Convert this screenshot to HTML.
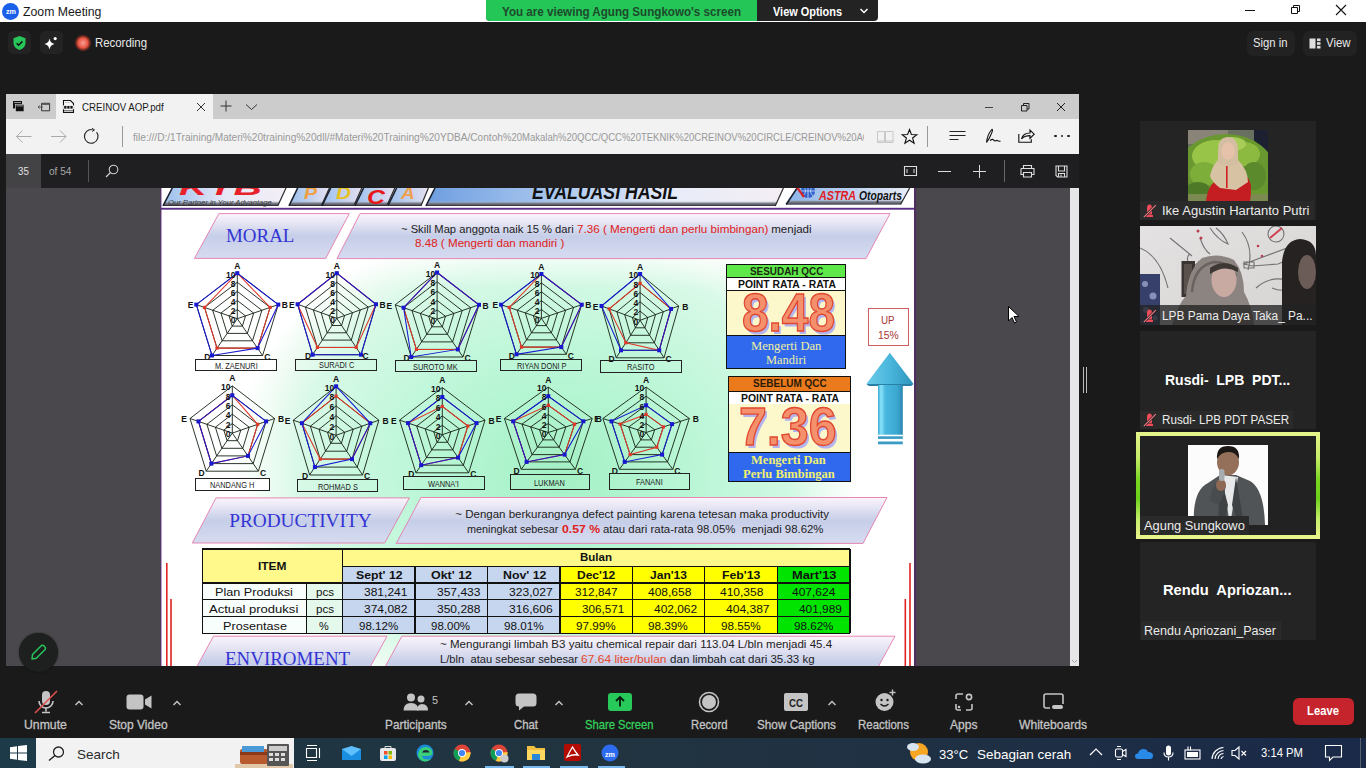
<!DOCTYPE html><html><head><meta charset="utf-8"><style>
*{margin:0;padding:0;box-sizing:border-box}
html,body{width:1366px;height:768px;overflow:hidden;background:#1a1a1a;font-family:"Liberation Sans",sans-serif;position:relative}
.ab{position:absolute}
.t{position:absolute;white-space:pre;line-height:1}
svg.ab{overflow:visible}
</style></head><body>
<div class="ab" style="left:0px;top:0px;width:1366px;height:22px;background:#fff;"></div>
<div class="ab" style="left:2px;top:3px;width:17px;height:17px;background:#1a5fe8;border-radius:50%"></div>
<div class="t" style="left:5.50px;top:8.35px;font-size:7.50px;color:#fff;font-family:'Liberation Sans',sans-serif;font-weight:bold;transform:scaleX(0.9598);transform-origin:0 0;">zm</div>
<div class="t" style="left:22.50px;top:6.37px;font-size:12.20px;color:#1a1a1a;font-family:'Liberation Sans',sans-serif;transform:scaleX(1.0067);transform-origin:0 0;">Zoom Meeting</div>
<div class="ab" style="left:486px;top:0;width:392px;height:21px;border-radius:0 0 4px 4px;background:#232323;overflow:hidden"><div class="ab" style="left:0;top:0;width:271px;height:21px;background:#24c658"></div></div>
<div class="t" style="left:501.50px;top:4.69px;font-size:13.00px;color:#1d4a2b;font-family:'Liberation Sans',sans-serif;font-weight:bold;transform:scaleX(0.8935);transform-origin:0 0;">You are viewing Agung Sungkowo's screen</div>
<div class="t" style="left:772.80px;top:4.69px;font-size:13.00px;color:#fff;font-family:'Liberation Sans',sans-serif;font-weight:bold;transform:scaleX(0.8404);transform-origin:0 0;">View Options</div>
<svg class="ab" style="left:859px;top:7px" width="10" height="8"><path d="M1.5 2L5 5.5L8.5 2" stroke="#fff" stroke-width="1.5" fill="none"/></svg>
<div class="ab" style="left:1245px;top:10px;width:10px;height:1px;background:#111;"></div>
<svg class="ab" style="left:1289px;top:4px" width="12" height="12"><path d="M2.5 3.5h6v6h-6z M4.5 3.5v-2h6v6h-2" stroke="#111" stroke-width="1" fill="none"/></svg>
<svg class="ab" style="left:1335px;top:4px" width="12" height="12"><path d="M1 1L11 11M11 1L1 11" stroke="#111" stroke-width="1.1"/></svg>
<div class="ab" style="left:8px;top:31px;width:23px;height:23px;background:#232323;border-radius:5px"></div>
<svg class="ab" style="left:12px;top:35px" width="15" height="16"><path d="M7.5 1L13.5 3.2V8c0 3.6-2.8 6-6 7C4.3 14 1.5 11.6 1.5 8V3.2z" fill="#27c55a"/><path d="M4.6 8.2l2 2 3.8-3.8" stroke="#111" stroke-width="1.5" fill="none"/></svg>
<div class="ab" style="left:40px;top:31px;width:23px;height:23px;background:#232323;border-radius:5px"></div>
<svg class="ab" style="left:43px;top:35px" width="16" height="16"><path d="M6.5 3.5Q7.3 8.2 11.5 9Q7.3 9.8 6.5 14.5Q5.7 9.8 1.5 9Q5.7 8.2 6.5 3.5z" fill="#fff"/><circle cx="12.2" cy="3.6" r="1.6" fill="#fff"/></svg>
<div class="ab" style="left:75px;top:35px;width:16px;height:16px;border-radius:50%;background:radial-gradient(circle,#f8a090 0%,#e8503f 45%,rgba(200,60,40,0.5) 60%,rgba(40,20,20,0) 100%)"></div>
<div class="t" style="left:95.00px;top:37.33px;font-size:12.60px;color:#e8e8e8;font-family:'Liberation Sans',sans-serif;transform:scaleX(0.9054);transform-origin:0 0;">Recording</div>
<div class="ab" style="left:1247px;top:31px;width:48px;height:25px;background:#222;border-radius:6px"></div>
<div class="t" style="left:1252.50px;top:37.33px;font-size:12.60px;color:#e8e8e8;font-family:'Liberation Sans',sans-serif;transform:scaleX(0.8955);transform-origin:0 0;">Sign in</div>
<div class="ab" style="left:1303px;top:31px;width:54px;height:25px;background:#222;border-radius:6px"></div>
<svg class="ab" style="left:1309px;top:38px" width="12" height="11"><rect x="0.5" y="0.5" width="6" height="10" fill="#ddd"/><rect x="8" y="0.5" width="3.5" height="2.6" fill="#ddd"/><rect x="8" y="4.2" width="3.5" height="2.6" fill="#ddd"/><rect x="8" y="7.9" width="3.5" height="2.6" fill="#ddd"/></svg>
<div class="t" style="left:1326.00px;top:37.33px;font-size:12.60px;color:#e8e8e8;font-family:'Liberation Sans',sans-serif;transform:scaleX(0.9046);transform-origin:0 0;">View</div>
<div class="ab" style="left:6px;top:94px;width:1073px;height:25px;background:#cccccc;"></div>
<div class="ab" style="left:56px;top:94px;width:157px;height:25px;background:#f2f2f2;"></div>
<div class="ab" style="left:6px;top:119px;width:1073px;height:35px;background:#f2f2f2;"></div>
<div class="ab" style="left:6px;top:154px;width:1073px;height:34px;background:#1f1f21;"></div>
<div class="ab" style="left:6px;top:154px;width:35px;height:34px;background:#434346;"></div>
<div class="ab" style="left:6px;top:188px;width:1064px;height:478px;background:#4a484c;"></div>
<div class="ab" style="left:1070px;top:188px;width:9px;height:478px;background:#e6e6e8;"></div>
<svg class="ab" style="left:1071px;top:659px" width="7" height="5" viewBox="0 0 7 5"><path d="M1 1L3.5 3.5L6 1" stroke="#999" stroke-width="0.9" fill="none"/></svg>
<svg class="ab" style="left:12px;top:99px" width="14" height="14" viewBox="0 0 14 14"><rect x="1" y="2" width="9" height="7.4" fill="#111"/><rect x="2" y="3.2" width="7" height="0.8" fill="#bbb"/><rect x="3.4" y="5.3" width="8.6" height="7.4" fill="#111" stroke="#ccc" stroke-width="0.7"/><rect x="4.4" y="6.5" width="6.6" height="0.8" fill="#bbb"/></svg>
<svg class="ab" style="left:37px;top:101px" width="14" height="12" viewBox="0 0 14 12"><path d="M4.6 2.3h8v7.5h-8z" stroke="#333" stroke-width="1" fill="none"/><rect x="4.6" y="2.3" width="8" height="1.6" fill="#555"/><path d="M1 6h5 M2.8 4.5L1 6L2.8 7.5" stroke="#555" stroke-width="0.9" fill="none"/></svg>
<svg class="ab" style="left:62px;top:99px" width="13" height="15" viewBox="0 0 13 15"><path d="M1.5 1.5h7l3 3v9h-10z" stroke="#111" stroke-width="1.1" fill="#fafafa"/><path d="M3 3.5h5" stroke="#999" stroke-width="0.6"/><rect x="1" y="6.3" width="11" height="4" fill="#ddd"/><g fill="#111"><rect x="2.2" y="7" width="2.2" height="2.6"/><rect x="5.3" y="7" width="2.2" height="2.6"/><rect x="8.4" y="7" width="2.2" height="2.6"/></g><path d="M2 11.8h9" stroke="#222" stroke-width="0.8"/></svg>
<div class="t" style="left:82.20px;top:101.72px;font-size:11.20px;color:#1a1a1a;font-family:'Liberation Sans',sans-serif;transform:scaleX(0.8664);transform-origin:0 0;">CREINOV AOP.pdf</div>
<svg class="ab" style="left:196px;top:102px" width="10" height="10"><path d="M1 1L9 9M9 1L1 9" stroke="#333" stroke-width="1"/></svg>
<svg class="ab" style="left:220px;top:100px" width="12" height="12"><path d="M6 0.5v11M0.5 6h11" stroke="#333" stroke-width="1"/></svg>
<svg class="ab" style="left:245px;top:103px" width="13" height="8"><path d="M1 1.5L6.5 6.5L12 1.5" stroke="#333" stroke-width="1" fill="none"/></svg>
<div class="ab" style="left:985px;top:107px;width:8px;height:1px;background:#444;"></div>
<svg class="ab" style="left:1020px;top:102px" width="11" height="10"><path d="M1.5 3.5h5.5v5.5h-5.5z M3.5 3.5v-2h5.5v5.5h-2" stroke="#222" stroke-width="1" fill="none"/></svg>
<svg class="ab" style="left:1056px;top:102px" width="10" height="10"><path d="M1 1L9 9M9 1L1 9" stroke="#222" stroke-width="1"/></svg>
<svg class="ab" style="left:15px;top:129px" width="18" height="15"><path d="M1.5 7.5h15 M7.5 1.5l-6 6l6 6" stroke="#aaa" stroke-width="1" fill="none"/></svg>
<svg class="ab" style="left:50px;top:129px" width="18" height="15"><path d="M1 7.5h15 M10 1.5l6 6l-6 6" stroke="#aaa" stroke-width="1" fill="none"/></svg>
<svg class="ab" style="left:84px;top:128px" width="17" height="17"><path d="M12.6 4.2A6.8 6.8 0 1 1 8.5 1.7" stroke="#222" stroke-width="1.1" fill="none"/><path d="M8 0.3L10.5 1.9L8 3.5" stroke="#222" stroke-width="1" fill="none"/></svg>
<div class="ab" style="left:122px;top:126px;width:1px;height:21px;background:#999;"></div>
<div class="ab" style="left:133px;top:119px;width:731px;height:35px;overflow:hidden"><div class="t" style="left:0.00px;top:12.63px;font-size:11.30px;color:#999;font-family:'Liberation Sans',sans-serif;transform:scaleX(0.8957);transform-origin:0 0;">file:///D:/1Training/Materi%20training%20dll/#Materi%20Training%20YDBA/Contoh</div><div class="t" style="left:370.00px;top:12.63px;font-size:11.30px;color:#999;font-family:'Liberation Sans',sans-serif;transform:scaleX(0.8417);transform-origin:0 0;">%20Makalah%20QCC/QCC%20TEKNIK%20CREINOV%20CIRCLE/CREINOV%20AOP.pdf</div></div>
<svg class="ab" style="left:877px;top:130px" width="17" height="14"><path d="M0.5 1.5h7v11h-7z M8.5 1.5h7.5v11h-7.5z M0.5 11h16" stroke="#c8c8c8" stroke-width="1" fill="none"/></svg>
<svg class="ab" style="left:901px;top:128px" width="17" height="17"><path d="M8.5 1.5L10.4 6.5L15.8 6.7L11.6 10L13.1 15.3L8.5 12.2L3.9 15.3L5.4 10L1.2 6.7L6.6 6.5z" stroke="#111" stroke-width="1.1" fill="none"/></svg>
<div class="ab" style="left:927px;top:126px;width:1px;height:21px;background:#999;"></div>
<svg class="ab" style="left:949px;top:130px" width="18" height="12"><path d="M0.5 1.5h16 M0.5 5.5h16 M0.5 9.5h9" stroke="#222" stroke-width="1.1"/></svg>
<svg class="ab" style="left:985px;top:128px" width="16" height="16"><path d="M1.5 14.5C2 10 4.5 4 6.8 1.5C8 1 7.5 3.5 6 6.5C4.8 9.5 3 12.5 1.5 14.5 M5 12.5C7 11 8.5 11 9 12.5C10 13.6 11 12 12 12.5C13 13 14 13.6 15.5 13" stroke="#111" stroke-width="1.1" fill="none"/></svg>
<svg class="ab" style="left:1018px;top:128px" width="17" height="15"><path d="M0.8 6v8.2h12.5v-3 M3.5 11C4.5 7 7.5 5 12 5V2l4.2 4.2L12 10.4V7.6C8.5 7.6 5.5 8.5 3.5 11z" stroke="#111" stroke-width="1.1" fill="none"/></svg>
<div class="ab" style="left:1054.4px;top:135.3px;width:2.2px;height:2.2px;background:#222;border-radius:50%"></div>
<div class="ab" style="left:1060.9px;top:135.3px;width:2.2px;height:2.2px;background:#222;border-radius:50%"></div>
<div class="ab" style="left:1067.4px;top:135.3px;width:2.2px;height:2.2px;background:#222;border-radius:50%"></div>
<div class="t" style="left:17.70px;top:166.41px;font-size:10.50px;color:#e0e0e0;font-family:'Liberation Sans',sans-serif;transform:scaleX(0.9247);transform-origin:0 0;">35</div>
<div class="t" style="left:48.50px;top:166.41px;font-size:10.50px;color:#a8a8a8;font-family:'Liberation Sans',sans-serif;transform:scaleX(0.9549);transform-origin:0 0;">of 54</div>
<div class="ab" style="left:88px;top:160px;width:1px;height:22px;background:#555;"></div>
<svg class="ab" style="left:105px;top:164px" width="14" height="14"><circle cx="8.5" cy="5.5" r="4.3" stroke="#ccc" stroke-width="1.1" fill="none"/><path d="M5.5 8.5L1 13" stroke="#ccc" stroke-width="1.3"/></svg>
<svg class="ab" style="left:903px;top:165px" width="15" height="12"><path d="M1.5 1.5h12v9h-12z" stroke="#ddd" stroke-width="1.1" fill="none"/><path d="M4 4v4 M11 4v4" stroke="#ddd" stroke-width="1"/></svg>
<div class="ab" style="left:938px;top:170.5px;width:13px;height:1.3px;background:#ddd;"></div>
<div class="ab" style="left:972.5px;top:170.5px;width:13.5px;height:1.3px;background:#ddd;"></div>
<div class="ab" style="left:978.6px;top:164.5px;width:1.3px;height:13px;background:#ddd;"></div>
<div class="ab" style="left:1003.5px;top:160px;width:1px;height:22px;background:#666;"></div>
<svg class="ab" style="left:1020px;top:164px" width="15" height="14"><path d="M3.5 4.5V1.5h8v3 M1 4.5h13v6h-2.5 M3.5 10.5H1v-6 M3.5 8.5h8v4.5h-8z" stroke="#ddd" stroke-width="1.1" fill="none"/></svg>
<svg class="ab" style="left:1055px;top:165px" width="13" height="13"><path d="M1 1h11v11H2.5L1 10.5z M3.5 1v5h6V1 M3.5 12V8.5h6V12 M6 9.5v2" stroke="#ddd" stroke-width="1.1" fill="none"/></svg>
<div class="ab" style="left:160px;top:188px;width:753.8px;height:478px;background:#fff;"></div>
<div class="ab" style="left:163px;top:258px;width:748px;height:408px;background:radial-gradient(ellipse 330px 260px at 397px 212px,#a4f0c4 0%,#b4f5d2 30%,#c0f7da 50%,#d8f9e7 80%,#eafbf0 90%,#ffffff 100%)"></div>
<div class="ab" style="left:163px;top:258px;width:140px;height:408px;background:linear-gradient(90deg,#fff 0%,rgba(255,255,255,0) 100%)"></div>
<div class="ab" style="left:790px;top:258px;width:121px;height:408px;background:linear-gradient(90deg,rgba(255,255,255,0) 0%,#fff 60%)"></div>
<div class="ab" style="left:163px;top:258px;width:748px;height:30px;background:linear-gradient(180deg,rgba(255,255,255,0.6) 0%,rgba(255,255,255,0) 100%)"></div>
<div class="ab" style="left:159.7px;top:188px;width:1.6px;height:478px;background:#4e3a5c;"></div>
<div class="ab" style="left:161.3px;top:188px;width:1px;height:478px;background:#b8a0c8;"></div>
<div class="ab" style="left:913.8px;top:188px;width:1.8px;height:478px;background:#4e2e5e;"></div>
<div class="ab" style="left:915.6px;top:188px;width:1.4px;height:478px;background:#4c4250;"></div>
<div class="ab" style="left:161px;top:188px;width:753px;height:478px;overflow:hidden"><svg class="ab" style="left:-161px;top:-188px" width="1366" height="768" viewBox="0 0 1366 768">
<defs>
<linearGradient id="pg" x1="0" y1="0" x2="0" y2="1"><stop offset="0" stop-color="#faf4fc"/><stop offset="0.15" stop-color="#eceaf6"/><stop offset="0.5" stop-color="#c6cee8"/><stop offset="1" stop-color="#d6dbf0"/></linearGradient>
<linearGradient id="kyb" x1="0" y1="0" x2="1" y2="0"><stop offset="0" stop-color="#9cc0ee"/><stop offset="0.5" stop-color="#e4e8f6"/><stop offset="1" stop-color="#f4eef6"/></linearGradient>
<linearGradient id="ev" x1="0" y1="0" x2="1" y2="0"><stop offset="0" stop-color="#6e9ee0"/><stop offset="0.35" stop-color="#a8c6ee"/><stop offset="0.7" stop-color="#e8ecf8"/><stop offset="1" stop-color="#f4eef4"/></linearGradient>
<linearGradient id="box" x1="0" y1="0" x2="1" y2="0"><stop offset="0" stop-color="#8ab4e8"/><stop offset="1" stop-color="#e8ecf6"/></linearGradient>
<linearGradient id="arr" x1="0" y1="0" x2="1" y2="0"><stop offset="0" stop-color="#80d4f0"/><stop offset="0.45" stop-color="#48b8e0"/><stop offset="1" stop-color="#2a8cb8"/></linearGradient>
</defs>
<defs><linearGradient id="bev" x1="0" y1="0" x2="0" y2="1"><stop offset="0" stop-color="#b8c0d0" stop-opacity="0"/><stop offset="0.45" stop-color="#7a7e8a"/><stop offset="0.8" stop-color="#5a5a64"/><stop offset="1" stop-color="#201420"/></linearGradient><linearGradient id="pdca" x1="0" y1="0" x2="1" y2="0"><stop offset="0" stop-color="#9cc0ee"/><stop offset="1" stop-color="#e4e0f0"/></linearGradient></defs>
<polygon points="172.3,188 286,188 277.7,205.9 163,205.9" fill="url(#kyb)"/>
<polygon points="165.598,200.9 280.298,200.9 277.7,205.9 163,205.9" fill="url(#bev)"/>
<line x1="172.3" y1="188" x2="163" y2="205.9" stroke="#1a2030" stroke-width="1.6"/>
<line x1="286" y1="188" x2="277.7" y2="205.9" stroke="#2a2a2a" stroke-width="1.2"/>
<polygon points="297.7,188 329.4,188 321.3,205.9 289,205.9" fill="url(#pdca)"/>
<polygon points="291.43,200.9 323.73,200.9 321.3,205.9 289,205.9" fill="url(#bev)"/>
<line x1="297.7" y1="188" x2="289" y2="205.9" stroke="#1a2030" stroke-width="1.6"/>
<line x1="329.4" y1="188" x2="321.3" y2="205.9" stroke="#2a2a2a" stroke-width="1.2"/>
<polygon points="330.7,188 361.8,188 353.7,205.9 322,205.9" fill="url(#pdca)"/>
<polygon points="324.43,200.9 356.13,200.9 353.7,205.9 322,205.9" fill="url(#bev)"/>
<line x1="330.7" y1="188" x2="322" y2="205.9" stroke="#1a2030" stroke-width="1.6"/>
<line x1="361.8" y1="188" x2="353.7" y2="205.9" stroke="#2a2a2a" stroke-width="1.2"/>
<polygon points="363.6,188 394.8,188 386.7,205.9 354.9,205.9" fill="url(#pdca)"/>
<polygon points="357.33,200.9 389.13,200.9 386.7,205.9 354.9,205.9" fill="url(#bev)"/>
<line x1="363.6" y1="188" x2="354.9" y2="205.9" stroke="#1a2030" stroke-width="1.6"/>
<line x1="394.8" y1="188" x2="386.7" y2="205.9" stroke="#2a2a2a" stroke-width="1.2"/>
<polygon points="396.6,188 428.4,188 420.9,205.9 387.9,205.9" fill="url(#pdca)"/>
<polygon points="390.33,200.9 423.33,200.9 420.9,205.9 387.9,205.9" fill="url(#bev)"/>
<line x1="396.6" y1="188" x2="387.9" y2="205.9" stroke="#1a2030" stroke-width="1.6"/>
<line x1="428.4" y1="188" x2="420.9" y2="205.9" stroke="#2a2a2a" stroke-width="1.2"/>
<polygon points="435,188 783.4,188 775.2,206 425.9,206" fill="url(#ev)"/>
<polygon points="428.428,201 777.728,201 775.2,206 425.9,206" fill="url(#bev)"/>
<line x1="435" y1="188" x2="425.9" y2="206" stroke="#1a2030" stroke-width="1.6"/>
<line x1="783.4" y1="188" x2="775.2" y2="206" stroke="#2a2a2a" stroke-width="1.2"/>
<polygon points="797.1,188 909.7,188 900.5,204.5 786.1,204.5" fill="url(#box)"/>
<polygon points="789.433,199.5 903.833,199.5 900.5,204.5 786.1,204.5" fill="url(#bev)"/>
<line x1="797.1" y1="188" x2="786.1" y2="204.5" stroke="#1a2030" stroke-width="1.6"/>
<line x1="909.7" y1="188" x2="900.5" y2="204.5" stroke="#2a2a2a" stroke-width="1.2"/>
<rect x="161" y="207.8" width="753" height="1.9" fill="#5a2e88"/>
<polygon points="218.9,213.6 349.3,213.6 325.7,258.4 194.4,258.4" fill="url(#pg)" stroke="#e47aac" stroke-width="0.9"/>
<polygon points="360,213.6 890,213.6 866,258.6 337,258.6" fill="url(#pg)" stroke="#e47aac" stroke-width="0.9"/>
<polygon points="216,497.9 409.3,497.9 384.7,543 192.3,543" fill="url(#pg)" stroke="#e47aac" stroke-width="0.9"/>
<polygon points="421,497.5 887,497.5 863,543.4 396.2,543.4" fill="url(#pg)" stroke="#e47aac" stroke-width="0.9"/>
<polygon points="213.5,636.2 387,636.2 357.5,690 184,690" fill="url(#pg)" stroke="#e47aac" stroke-width="0.9"/>
<polygon points="401.9,636.2 895,636.2 865.5,690 372.4,690" fill="url(#pg)" stroke="#e47aac" stroke-width="0.9"/>
<polygon points="237.3,309.6 245.5,315.9 242.4,326.1 232.2,326.1 229.1,315.9" fill="none" stroke="#142014" stroke-width="0.9"/>
<polygon points="237.3,300.5 253.7,313.1 247.4,333.4 227.2,333.4 220.9,313.1" fill="none" stroke="#142014" stroke-width="0.9"/>
<polygon points="237.3,291.4 261.9,310.3 252.5,340.8 222.1,340.8 212.7,310.3" fill="none" stroke="#142014" stroke-width="0.9"/>
<polygon points="237.3,282.3 270.1,307.4 257.6,348.1 217.0,348.1 204.5,307.4" fill="none" stroke="#142014" stroke-width="0.9"/>
<polygon points="237.3,273.2 278.3,304.6 262.6,355.5 212.0,355.5 196.3,304.6" fill="none" stroke="#142014" stroke-width="0.9"/>
<line x1="237.3" y1="318.7" x2="237.3" y2="273.2" stroke="#142014" stroke-width="0.9"/>
<line x1="237.3" y1="318.7" x2="278.3" y2="304.6" stroke="#142014" stroke-width="0.9"/>
<line x1="237.3" y1="318.7" x2="262.6" y2="355.5" stroke="#142014" stroke-width="0.9"/>
<line x1="237.3" y1="318.7" x2="212.0" y2="355.5" stroke="#142014" stroke-width="0.9"/>
<line x1="237.3" y1="318.7" x2="196.3" y2="304.6" stroke="#142014" stroke-width="0.9"/>
<polygon points="237.3,273.2 270.1,307.4 257.6,348.1 217.0,348.1 204.5,307.4" fill="none" stroke="#e03828" stroke-width="1.05"/>
<rect x="235.7" y="271.6" width="3.2" height="3.2" fill="#e03828"/>
<rect x="268.5" y="305.8" width="3.2" height="3.2" fill="#e03828"/>
<rect x="256.0" y="346.5" width="3.2" height="3.2" fill="#e03828"/>
<rect x="215.4" y="346.5" width="3.2" height="3.2" fill="#e03828"/>
<rect x="202.9" y="305.8" width="3.2" height="3.2" fill="#e03828"/>
<polygon points="237.3,273.2 278.3,304.6 257.6,348.1 212.0,355.5 196.3,304.6" fill="none" stroke="#1818d0" stroke-width="1.05"/>
<rect x="235.3" y="271.2" width="4.0" height="4.0" fill="#1818d0"/>
<rect x="276.3" y="302.6" width="4.0" height="4.0" fill="#1818d0"/>
<rect x="255.6" y="346.1" width="4.0" height="4.0" fill="#1818d0"/>
<rect x="210.0" y="353.5" width="4.0" height="4.0" fill="#1818d0"/>
<rect x="194.3" y="302.6" width="4.0" height="4.0" fill="#1818d0"/>
<polygon points="336.8,309.2 344.6,315.5 341.6,325.5 332.0,325.5 329.0,315.5" fill="none" stroke="#142014" stroke-width="0.9"/>
<polygon points="336.8,300.2 352.5,312.7 346.5,332.8 327.1,332.8 321.1,312.7" fill="none" stroke="#142014" stroke-width="0.9"/>
<polygon points="336.8,291.2 360.3,309.9 351.3,340.1 322.3,340.1 313.3,309.9" fill="none" stroke="#142014" stroke-width="0.9"/>
<polygon points="336.8,282.2 368.2,307.1 356.2,347.4 317.4,347.4 305.4,307.1" fill="none" stroke="#142014" stroke-width="0.9"/>
<polygon points="336.8,273.2 376.0,304.3 361.0,354.7 312.6,354.7 297.6,304.3" fill="none" stroke="#142014" stroke-width="0.9"/>
<line x1="336.8" y1="318.3" x2="336.8" y2="273.2" stroke="#142014" stroke-width="0.9"/>
<line x1="336.8" y1="318.3" x2="376.0" y2="304.3" stroke="#142014" stroke-width="0.9"/>
<line x1="336.8" y1="318.3" x2="361.0" y2="354.7" stroke="#142014" stroke-width="0.9"/>
<line x1="336.8" y1="318.3" x2="312.6" y2="354.7" stroke="#142014" stroke-width="0.9"/>
<line x1="336.8" y1="318.3" x2="297.6" y2="304.3" stroke="#142014" stroke-width="0.9"/>
<polygon points="336.8,273.2 376.0,304.3 356.2,347.4 317.4,347.4 297.6,304.3" fill="none" stroke="#e03828" stroke-width="1.05"/>
<rect x="335.2" y="271.6" width="3.2" height="3.2" fill="#e03828"/>
<rect x="374.4" y="302.7" width="3.2" height="3.2" fill="#e03828"/>
<rect x="354.6" y="345.8" width="3.2" height="3.2" fill="#e03828"/>
<rect x="315.8" y="345.8" width="3.2" height="3.2" fill="#e03828"/>
<rect x="296.0" y="302.7" width="3.2" height="3.2" fill="#e03828"/>
<polygon points="336.8,273.2 376.0,304.3 361.0,354.7 312.6,354.7 297.6,304.3" fill="none" stroke="#1818d0" stroke-width="1.05"/>
<rect x="334.8" y="271.2" width="4.0" height="4.0" fill="#1818d0"/>
<rect x="374.0" y="302.3" width="4.0" height="4.0" fill="#1818d0"/>
<rect x="359.0" y="352.7" width="4.0" height="4.0" fill="#1818d0"/>
<rect x="310.6" y="352.7" width="4.0" height="4.0" fill="#1818d0"/>
<rect x="295.6" y="302.3" width="4.0" height="4.0" fill="#1818d0"/>
<polygon points="437.1,309.9 445.5,316.3 442.3,326.8 431.9,326.8 428.7,316.3" fill="none" stroke="#142014" stroke-width="0.9"/>
<polygon points="437.1,300.5 453.9,313.4 447.5,334.3 426.7,334.3 420.3,313.4" fill="none" stroke="#142014" stroke-width="0.9"/>
<polygon points="437.1,291.2 462.2,310.6 452.6,341.9 421.6,341.9 412.0,310.6" fill="none" stroke="#142014" stroke-width="0.9"/>
<polygon points="437.1,281.8 470.6,307.7 457.8,349.4 416.4,349.4 403.6,307.7" fill="none" stroke="#142014" stroke-width="0.9"/>
<polygon points="437.1,272.5 479.0,304.8 463.0,357.0 411.2,357.0 395.2,304.8" fill="none" stroke="#142014" stroke-width="0.9"/>
<line x1="437.1" y1="319.2" x2="437.1" y2="272.5" stroke="#142014" stroke-width="0.9"/>
<line x1="437.1" y1="319.2" x2="479.0" y2="304.8" stroke="#142014" stroke-width="0.9"/>
<line x1="437.1" y1="319.2" x2="463.0" y2="357.0" stroke="#142014" stroke-width="0.9"/>
<line x1="437.1" y1="319.2" x2="411.2" y2="357.0" stroke="#142014" stroke-width="0.9"/>
<line x1="437.1" y1="319.2" x2="395.2" y2="304.8" stroke="#142014" stroke-width="0.9"/>
<polygon points="437.1,272.5 479.0,304.8 457.8,349.4 416.4,349.4 403.6,307.7" fill="none" stroke="#e03828" stroke-width="1.05"/>
<rect x="435.5" y="270.9" width="3.2" height="3.2" fill="#e03828"/>
<rect x="477.4" y="303.2" width="3.2" height="3.2" fill="#e03828"/>
<rect x="456.2" y="347.8" width="3.2" height="3.2" fill="#e03828"/>
<rect x="414.8" y="347.8" width="3.2" height="3.2" fill="#e03828"/>
<rect x="402.0" y="306.1" width="3.2" height="3.2" fill="#e03828"/>
<polygon points="437.1,272.5 479.0,304.8 457.8,349.4 411.2,357.0 403.6,307.7" fill="none" stroke="#1818d0" stroke-width="1.05"/>
<rect x="435.1" y="270.5" width="4.0" height="4.0" fill="#1818d0"/>
<rect x="477.0" y="302.8" width="4.0" height="4.0" fill="#1818d0"/>
<rect x="455.8" y="347.4" width="4.0" height="4.0" fill="#1818d0"/>
<rect x="409.2" y="355.0" width="4.0" height="4.0" fill="#1818d0"/>
<rect x="401.6" y="305.7" width="4.0" height="4.0" fill="#1818d0"/>
<polygon points="541.4,309.5 549.5,315.6 546.4,325.6 536.4,325.6 533.3,315.6" fill="none" stroke="#142014" stroke-width="0.9"/>
<polygon points="541.4,300.6 557.5,312.9 551.4,332.8 531.4,332.8 525.3,312.9" fill="none" stroke="#142014" stroke-width="0.9"/>
<polygon points="541.4,291.8 565.6,310.2 556.3,339.9 526.5,339.9 517.2,310.2" fill="none" stroke="#142014" stroke-width="0.9"/>
<polygon points="541.4,282.9 573.6,307.4 561.3,347.1 521.5,347.1 509.2,307.4" fill="none" stroke="#142014" stroke-width="0.9"/>
<polygon points="541.4,274.0 581.7,304.7 566.3,354.3 516.5,354.3 501.1,304.7" fill="none" stroke="#142014" stroke-width="0.9"/>
<line x1="541.4" y1="318.4" x2="541.4" y2="274.0" stroke="#142014" stroke-width="0.9"/>
<line x1="541.4" y1="318.4" x2="581.7" y2="304.7" stroke="#142014" stroke-width="0.9"/>
<line x1="541.4" y1="318.4" x2="566.3" y2="354.3" stroke="#142014" stroke-width="0.9"/>
<line x1="541.4" y1="318.4" x2="516.5" y2="354.3" stroke="#142014" stroke-width="0.9"/>
<line x1="541.4" y1="318.4" x2="501.1" y2="304.7" stroke="#142014" stroke-width="0.9"/>
<polygon points="541.4,274.0 581.7,304.7 561.3,347.1 521.5,347.1 509.2,307.4" fill="none" stroke="#e03828" stroke-width="1.05"/>
<rect x="539.8" y="272.4" width="3.2" height="3.2" fill="#e03828"/>
<rect x="580.1" y="303.1" width="3.2" height="3.2" fill="#e03828"/>
<rect x="559.7" y="345.5" width="3.2" height="3.2" fill="#e03828"/>
<rect x="519.9" y="345.5" width="3.2" height="3.2" fill="#e03828"/>
<rect x="507.6" y="305.8" width="3.2" height="3.2" fill="#e03828"/>
<polygon points="541.4,274.0 581.7,304.7 561.3,347.1 516.5,354.3 501.1,304.7" fill="none" stroke="#1818d0" stroke-width="1.05"/>
<rect x="539.4" y="272.0" width="4.0" height="4.0" fill="#1818d0"/>
<rect x="579.7" y="302.7" width="4.0" height="4.0" fill="#1818d0"/>
<rect x="559.3" y="345.1" width="4.0" height="4.0" fill="#1818d0"/>
<rect x="514.5" y="352.3" width="4.0" height="4.0" fill="#1818d0"/>
<rect x="499.1" y="302.7" width="4.0" height="4.0" fill="#1818d0"/>
<polygon points="640.1,311.1 647.8,317.5 644.9,327.8 635.3,327.8 632.4,317.5" fill="none" stroke="#142014" stroke-width="0.9"/>
<polygon points="640.1,301.8 655.5,314.6 649.6,335.3 630.6,335.3 624.7,314.6" fill="none" stroke="#142014" stroke-width="0.9"/>
<polygon points="640.1,292.5 663.3,311.7 654.4,342.8 625.8,342.8 616.9,311.7" fill="none" stroke="#142014" stroke-width="0.9"/>
<polygon points="640.1,283.3 671.0,308.9 659.2,350.3 621.0,350.3 609.2,308.9" fill="none" stroke="#142014" stroke-width="0.9"/>
<polygon points="640.1,274.0 678.7,306.0 664.0,357.8 616.2,357.8 601.5,306.0" fill="none" stroke="#142014" stroke-width="0.9"/>
<line x1="640.1" y1="320.3" x2="640.1" y2="274.0" stroke="#142014" stroke-width="0.9"/>
<line x1="640.1" y1="320.3" x2="678.7" y2="306.0" stroke="#142014" stroke-width="0.9"/>
<line x1="640.1" y1="320.3" x2="664.0" y2="357.8" stroke="#142014" stroke-width="0.9"/>
<line x1="640.1" y1="320.3" x2="616.2" y2="357.8" stroke="#142014" stroke-width="0.9"/>
<line x1="640.1" y1="320.3" x2="601.5" y2="306.0" stroke="#142014" stroke-width="0.9"/>
<polygon points="640.1,283.3 671.0,308.9 659.2,350.3 625.8,342.8 609.2,308.9" fill="none" stroke="#e03828" stroke-width="1.05"/>
<rect x="638.5" y="281.7" width="3.2" height="3.2" fill="#e03828"/>
<rect x="669.4" y="307.3" width="3.2" height="3.2" fill="#e03828"/>
<rect x="657.6" y="348.7" width="3.2" height="3.2" fill="#e03828"/>
<rect x="624.2" y="341.2" width="3.2" height="3.2" fill="#e03828"/>
<rect x="607.6" y="307.3" width="3.2" height="3.2" fill="#e03828"/>
<polygon points="640.1,274.0 671.0,308.9 659.2,350.3 621.0,350.3 601.5,306.0" fill="none" stroke="#1818d0" stroke-width="1.05"/>
<rect x="638.1" y="272.0" width="4.0" height="4.0" fill="#1818d0"/>
<rect x="669.0" y="306.9" width="4.0" height="4.0" fill="#1818d0"/>
<rect x="657.2" y="348.3" width="4.0" height="4.0" fill="#1818d0"/>
<rect x="619.0" y="348.3" width="4.0" height="4.0" fill="#1818d0"/>
<rect x="599.5" y="304.0" width="4.0" height="4.0" fill="#1818d0"/>
<polygon points="232.3,423.6 240.8,430.1 237.5,440.7 227.1,440.7 223.8,430.1" fill="none" stroke="#142014" stroke-width="0.9"/>
<polygon points="232.3,414.2 249.2,427.2 242.8,448.3 221.8,448.3 215.4,427.2" fill="none" stroke="#142014" stroke-width="0.9"/>
<polygon points="232.3,404.8 257.7,424.3 248.0,455.9 216.6,455.9 206.9,424.3" fill="none" stroke="#142014" stroke-width="0.9"/>
<polygon points="232.3,395.3 266.1,421.4 253.2,463.6 211.4,463.6 198.5,421.4" fill="none" stroke="#142014" stroke-width="0.9"/>
<polygon points="232.3,385.9 274.6,418.5 258.4,471.2 206.2,471.2 190.0,418.5" fill="none" stroke="#142014" stroke-width="0.9"/>
<line x1="232.3" y1="433.1" x2="232.3" y2="385.9" stroke="#142014" stroke-width="0.9"/>
<line x1="232.3" y1="433.1" x2="274.6" y2="418.5" stroke="#142014" stroke-width="0.9"/>
<line x1="232.3" y1="433.1" x2="258.4" y2="471.2" stroke="#142014" stroke-width="0.9"/>
<line x1="232.3" y1="433.1" x2="206.2" y2="471.2" stroke="#142014" stroke-width="0.9"/>
<line x1="232.3" y1="433.1" x2="190.0" y2="418.5" stroke="#142014" stroke-width="0.9"/>
<polygon points="232.3,395.3 257.7,424.3 248.0,455.9 211.4,463.6 198.5,421.4" fill="none" stroke="#e03828" stroke-width="1.05"/>
<rect x="230.7" y="393.7" width="3.2" height="3.2" fill="#e03828"/>
<rect x="256.1" y="422.7" width="3.2" height="3.2" fill="#e03828"/>
<rect x="246.4" y="454.3" width="3.2" height="3.2" fill="#e03828"/>
<rect x="209.8" y="462.0" width="3.2" height="3.2" fill="#e03828"/>
<rect x="196.9" y="419.8" width="3.2" height="3.2" fill="#e03828"/>
<polygon points="232.3,395.3 266.1,421.4 248.0,455.9 211.4,463.6 198.5,421.4" fill="none" stroke="#1818d0" stroke-width="1.05"/>
<rect x="230.3" y="393.3" width="4.0" height="4.0" fill="#1818d0"/>
<rect x="264.1" y="419.4" width="4.0" height="4.0" fill="#1818d0"/>
<rect x="246.0" y="453.9" width="4.0" height="4.0" fill="#1818d0"/>
<rect x="209.4" y="461.6" width="4.0" height="4.0" fill="#1818d0"/>
<rect x="196.5" y="419.4" width="4.0" height="4.0" fill="#1818d0"/>
<polygon points="336.1,425.5 344.7,432.3 341.4,443.3 330.8,443.3 327.5,432.3" fill="none" stroke="#142014" stroke-width="0.9"/>
<polygon points="336.1,415.7 353.2,429.3 346.7,451.2 325.5,451.2 319.0,429.3" fill="none" stroke="#142014" stroke-width="0.9"/>
<polygon points="336.1,405.9 361.8,426.2 352.0,459.1 320.2,459.1 310.4,426.2" fill="none" stroke="#142014" stroke-width="0.9"/>
<polygon points="336.1,396.1 370.3,423.2 357.3,467.1 314.9,467.1 301.9,423.2" fill="none" stroke="#142014" stroke-width="0.9"/>
<polygon points="336.1,386.3 378.9,420.2 362.6,475.0 309.6,475.0 293.3,420.2" fill="none" stroke="#142014" stroke-width="0.9"/>
<line x1="336.1" y1="435.3" x2="336.1" y2="386.3" stroke="#142014" stroke-width="0.9"/>
<line x1="336.1" y1="435.3" x2="378.9" y2="420.2" stroke="#142014" stroke-width="0.9"/>
<line x1="336.1" y1="435.3" x2="362.6" y2="475.0" stroke="#142014" stroke-width="0.9"/>
<line x1="336.1" y1="435.3" x2="309.6" y2="475.0" stroke="#142014" stroke-width="0.9"/>
<line x1="336.1" y1="435.3" x2="293.3" y2="420.2" stroke="#142014" stroke-width="0.9"/>
<polygon points="336.1,396.1 370.3,423.2 352.0,459.1 320.2,459.1 301.9,423.2" fill="none" stroke="#e03828" stroke-width="1.05"/>
<rect x="334.5" y="394.5" width="3.2" height="3.2" fill="#e03828"/>
<rect x="368.7" y="421.6" width="3.2" height="3.2" fill="#e03828"/>
<rect x="350.4" y="457.5" width="3.2" height="3.2" fill="#e03828"/>
<rect x="318.6" y="457.5" width="3.2" height="3.2" fill="#e03828"/>
<rect x="300.3" y="421.6" width="3.2" height="3.2" fill="#e03828"/>
<polygon points="336.1,386.3 370.3,423.2 352.0,459.1 314.9,467.1 301.9,423.2" fill="none" stroke="#1818d0" stroke-width="1.05"/>
<rect x="334.1" y="384.3" width="4.0" height="4.0" fill="#1818d0"/>
<rect x="368.3" y="421.2" width="4.0" height="4.0" fill="#1818d0"/>
<rect x="350.0" y="457.1" width="4.0" height="4.0" fill="#1818d0"/>
<rect x="312.9" y="465.1" width="4.0" height="4.0" fill="#1818d0"/>
<rect x="299.9" y="421.2" width="4.0" height="4.0" fill="#1818d0"/>
<polygon points="442.3,425.3 450.8,431.8 447.6,442.3 437.0,442.3 433.8,431.8" fill="none" stroke="#142014" stroke-width="0.9"/>
<polygon points="442.3,415.9 459.4,428.9 452.9,449.9 431.7,449.9 425.2,428.9" fill="none" stroke="#142014" stroke-width="0.9"/>
<polygon points="442.3,406.4 467.9,426.0 458.1,457.6 426.5,457.6 416.7,426.0" fill="none" stroke="#142014" stroke-width="0.9"/>
<polygon points="442.3,397.0 476.5,423.1 463.4,465.2 421.2,465.2 408.1,423.1" fill="none" stroke="#142014" stroke-width="0.9"/>
<polygon points="442.3,387.6 485.0,420.1 468.7,472.8 415.9,472.8 399.6,420.1" fill="none" stroke="#142014" stroke-width="0.9"/>
<line x1="442.3" y1="434.7" x2="442.3" y2="387.6" stroke="#142014" stroke-width="0.9"/>
<line x1="442.3" y1="434.7" x2="485.0" y2="420.1" stroke="#142014" stroke-width="0.9"/>
<line x1="442.3" y1="434.7" x2="468.7" y2="472.8" stroke="#142014" stroke-width="0.9"/>
<line x1="442.3" y1="434.7" x2="415.9" y2="472.8" stroke="#142014" stroke-width="0.9"/>
<line x1="442.3" y1="434.7" x2="399.6" y2="420.1" stroke="#142014" stroke-width="0.9"/>
<polygon points="442.3,406.4 467.9,426.0 458.1,457.6 421.2,465.2 408.1,423.1" fill="none" stroke="#e03828" stroke-width="1.05"/>
<rect x="440.7" y="404.8" width="3.2" height="3.2" fill="#e03828"/>
<rect x="466.3" y="424.4" width="3.2" height="3.2" fill="#e03828"/>
<rect x="456.5" y="456.0" width="3.2" height="3.2" fill="#e03828"/>
<rect x="419.6" y="463.6" width="3.2" height="3.2" fill="#e03828"/>
<rect x="406.5" y="421.5" width="3.2" height="3.2" fill="#e03828"/>
<polygon points="442.3,397.0 476.5,423.1 458.1,457.6 421.2,465.2 408.1,423.1" fill="none" stroke="#1818d0" stroke-width="1.05"/>
<rect x="440.3" y="395.0" width="4.0" height="4.0" fill="#1818d0"/>
<rect x="474.5" y="421.1" width="4.0" height="4.0" fill="#1818d0"/>
<rect x="456.1" y="455.6" width="4.0" height="4.0" fill="#1818d0"/>
<rect x="419.2" y="463.2" width="4.0" height="4.0" fill="#1818d0"/>
<rect x="406.1" y="421.1" width="4.0" height="4.0" fill="#1818d0"/>
<polygon points="548.3,423.5 557.1,429.7 553.7,439.9 542.9,439.9 539.5,429.7" fill="none" stroke="#142014" stroke-width="0.9"/>
<polygon points="548.3,414.4 565.9,426.9 559.2,447.2 537.4,447.2 530.7,426.9" fill="none" stroke="#142014" stroke-width="0.9"/>
<polygon points="548.3,405.3 574.6,424.1 564.6,454.6 532.0,454.6 522.0,424.1" fill="none" stroke="#142014" stroke-width="0.9"/>
<polygon points="548.3,396.2 583.4,421.3 570.0,461.9 526.6,461.9 513.2,421.3" fill="none" stroke="#142014" stroke-width="0.9"/>
<polygon points="548.3,387.1 592.2,418.5 575.4,469.3 521.2,469.3 504.4,418.5" fill="none" stroke="#142014" stroke-width="0.9"/>
<line x1="548.3" y1="432.5" x2="548.3" y2="387.1" stroke="#142014" stroke-width="0.9"/>
<line x1="548.3" y1="432.5" x2="592.2" y2="418.5" stroke="#142014" stroke-width="0.9"/>
<line x1="548.3" y1="432.5" x2="575.4" y2="469.3" stroke="#142014" stroke-width="0.9"/>
<line x1="548.3" y1="432.5" x2="521.2" y2="469.3" stroke="#142014" stroke-width="0.9"/>
<line x1="548.3" y1="432.5" x2="504.4" y2="418.5" stroke="#142014" stroke-width="0.9"/>
<polygon points="548.3,405.3 574.6,424.1 564.6,454.6 526.6,461.9 513.2,421.3" fill="none" stroke="#e03828" stroke-width="1.05"/>
<rect x="546.7" y="403.7" width="3.2" height="3.2" fill="#e03828"/>
<rect x="573.0" y="422.5" width="3.2" height="3.2" fill="#e03828"/>
<rect x="563.0" y="453.0" width="3.2" height="3.2" fill="#e03828"/>
<rect x="525.0" y="460.3" width="3.2" height="3.2" fill="#e03828"/>
<rect x="511.6" y="419.7" width="3.2" height="3.2" fill="#e03828"/>
<polygon points="548.3,396.2 583.4,421.3 564.6,454.6 526.6,461.9 513.2,421.3" fill="none" stroke="#1818d0" stroke-width="1.05"/>
<rect x="546.3" y="394.2" width="4.0" height="4.0" fill="#1818d0"/>
<rect x="581.4" y="419.3" width="4.0" height="4.0" fill="#1818d0"/>
<rect x="562.6" y="452.6" width="4.0" height="4.0" fill="#1818d0"/>
<rect x="524.6" y="459.9" width="4.0" height="4.0" fill="#1818d0"/>
<rect x="511.2" y="419.3" width="4.0" height="4.0" fill="#1818d0"/>
<polygon points="646.1,423.5 654.7,429.7 651.4,439.9 640.8,439.9 637.5,429.7" fill="none" stroke="#142014" stroke-width="0.9"/>
<polygon points="646.1,414.4 663.4,426.9 656.8,447.2 635.4,447.2 628.8,426.9" fill="none" stroke="#142014" stroke-width="0.9"/>
<polygon points="646.1,405.3 672.0,424.1 662.1,454.6 630.1,454.6 620.2,424.1" fill="none" stroke="#142014" stroke-width="0.9"/>
<polygon points="646.1,396.2 680.7,421.3 667.5,461.9 624.7,461.9 611.5,421.3" fill="none" stroke="#142014" stroke-width="0.9"/>
<polygon points="646.1,387.1 689.3,418.5 672.8,469.3 619.4,469.3 602.9,418.5" fill="none" stroke="#142014" stroke-width="0.9"/>
<line x1="646.1" y1="432.5" x2="646.1" y2="387.1" stroke="#142014" stroke-width="0.9"/>
<line x1="646.1" y1="432.5" x2="689.3" y2="418.5" stroke="#142014" stroke-width="0.9"/>
<line x1="646.1" y1="432.5" x2="672.8" y2="469.3" stroke="#142014" stroke-width="0.9"/>
<line x1="646.1" y1="432.5" x2="619.4" y2="469.3" stroke="#142014" stroke-width="0.9"/>
<line x1="646.1" y1="432.5" x2="602.9" y2="418.5" stroke="#142014" stroke-width="0.9"/>
<polygon points="646.1,414.4 663.4,426.9 656.8,447.2 630.1,454.6 620.2,424.1" fill="none" stroke="#e03828" stroke-width="1.05"/>
<rect x="644.5" y="412.8" width="3.2" height="3.2" fill="#e03828"/>
<rect x="661.8" y="425.3" width="3.2" height="3.2" fill="#e03828"/>
<rect x="655.2" y="445.6" width="3.2" height="3.2" fill="#e03828"/>
<rect x="628.5" y="453.0" width="3.2" height="3.2" fill="#e03828"/>
<rect x="618.6" y="422.5" width="3.2" height="3.2" fill="#e03828"/>
<polygon points="646.1,405.3 672.0,424.1 662.1,454.6 624.7,461.9 611.5,421.3" fill="none" stroke="#1818d0" stroke-width="1.05"/>
<rect x="644.1" y="403.3" width="4.0" height="4.0" fill="#1818d0"/>
<rect x="670.0" y="422.1" width="4.0" height="4.0" fill="#1818d0"/>
<rect x="660.1" y="452.6" width="4.0" height="4.0" fill="#1818d0"/>
<rect x="622.7" y="459.9" width="4.0" height="4.0" fill="#1818d0"/>
<rect x="609.5" y="419.3" width="4.0" height="4.0" fill="#1818d0"/>
<defs><linearGradient id="arh" x1="0" y1="0" x2="1" y2="0"><stop offset="0" stop-color="#6ccbe8"/><stop offset="0.5" stop-color="#4ab6dc"/><stop offset="1" stop-color="#2e94bc"/></linearGradient><linearGradient id="ars" x1="0" y1="0" x2="1" y2="0"><stop offset="0" stop-color="#3aa8d0"/><stop offset="0.12" stop-color="#8ae4fa"/><stop offset="0.3" stop-color="#48b8de"/><stop offset="0.8" stop-color="#3aa6d0"/><stop offset="1" stop-color="#2a86b0"/></linearGradient></defs>
<polygon points="889.8,352.7 913.6,384 866.3,384" fill="url(#arh)"/>
<polygon points="866.3,384 913.6,384 911,386 869,386" fill="#2a7fa6"/>
<rect x="878" y="385" width="24.8" height="49.7" fill="url(#ars)"/>
<rect x="878" y="436.3" width="24.8" height="2.6" fill="#3a9cc4"/>
<rect x="878" y="441.5" width="24.8" height="2.8" fill="#3a9cc4"/>
<rect x="166" y="563" width="1.6" height="103" fill="#e02424"/>
<rect x="170.2" y="599" width="1.6" height="67" fill="#e02424"/>
<rect x="909.2" y="563" width="1.6" height="103" fill="#e02424"/>
<rect x="904.5" y="599" width="1.6" height="67" fill="#e02424"/>
</svg></div>
<div class="t" style="left:234.23px;top:261.70px;font-size:8.50px;color:#111;font-family:'Liberation Sans',sans-serif;font-weight:bold;">A</div>
<div class="t" style="left:281.80px;top:301.44px;font-size:8.50px;color:#111;font-family:'Liberation Sans',sans-serif;font-weight:bold;">B</div>
<div class="t" style="left:187.63px;top:301.44px;font-size:8.50px;color:#111;font-family:'Liberation Sans',sans-serif;font-weight:bold;">E</div>
<div class="t" style="left:264.14px;top:352.80px;font-size:8.50px;color:#111;font-family:'Liberation Sans',sans-serif;font-weight:bold;">C</div>
<div class="t" style="left:204.32px;top:352.80px;font-size:8.50px;color:#111;font-family:'Liberation Sans',sans-serif;font-weight:bold;">D</div>
<div class="t" style="left:230.77px;top:316.00px;font-size:8.50px;color:#111;font-family:'Liberation Sans',sans-serif;font-weight:bold;">0</div>
<div class="t" style="left:230.77px;top:306.90px;font-size:8.50px;color:#111;font-family:'Liberation Sans',sans-serif;font-weight:bold;">2</div>
<div class="t" style="left:230.77px;top:297.80px;font-size:8.50px;color:#111;font-family:'Liberation Sans',sans-serif;font-weight:bold;">4</div>
<div class="t" style="left:230.77px;top:288.70px;font-size:8.50px;color:#111;font-family:'Liberation Sans',sans-serif;font-weight:bold;">6</div>
<div class="t" style="left:230.77px;top:279.60px;font-size:8.50px;color:#111;font-family:'Liberation Sans',sans-serif;font-weight:bold;">8</div>
<div class="t" style="left:226.05px;top:270.50px;font-size:8.50px;color:#111;font-family:'Liberation Sans',sans-serif;font-weight:bold;">10</div>
<div class="ab" style="left:195.2px;top:359.3px;width:82.3px;height:12.2px;border:1px solid #222;background:#fff"></div>
<div class="t" style="left:214.98px;top:362.02px;font-size:8.60px;color:#222;font-family:'Liberation Sans',sans-serif;transform:scaleX(0.8600);transform-origin:0 0;">M. ZAENURI</div>
<div class="t" style="left:333.73px;top:261.70px;font-size:8.50px;color:#111;font-family:'Liberation Sans',sans-serif;font-weight:bold;">A</div>
<div class="t" style="left:379.50px;top:301.13px;font-size:8.50px;color:#111;font-family:'Liberation Sans',sans-serif;font-weight:bold;">B</div>
<div class="t" style="left:288.93px;top:301.13px;font-size:8.50px;color:#111;font-family:'Liberation Sans',sans-serif;font-weight:bold;">E</div>
<div class="t" style="left:362.53px;top:352.00px;font-size:8.50px;color:#111;font-family:'Liberation Sans',sans-serif;font-weight:bold;">C</div>
<div class="t" style="left:304.93px;top:352.00px;font-size:8.50px;color:#111;font-family:'Liberation Sans',sans-serif;font-weight:bold;">D</div>
<div class="t" style="left:330.27px;top:315.56px;font-size:8.50px;color:#111;font-family:'Liberation Sans',sans-serif;font-weight:bold;">0</div>
<div class="t" style="left:330.27px;top:306.55px;font-size:8.50px;color:#111;font-family:'Liberation Sans',sans-serif;font-weight:bold;">2</div>
<div class="t" style="left:330.27px;top:297.53px;font-size:8.50px;color:#111;font-family:'Liberation Sans',sans-serif;font-weight:bold;">4</div>
<div class="t" style="left:330.27px;top:288.52px;font-size:8.50px;color:#111;font-family:'Liberation Sans',sans-serif;font-weight:bold;">6</div>
<div class="t" style="left:330.27px;top:279.51px;font-size:8.50px;color:#111;font-family:'Liberation Sans',sans-serif;font-weight:bold;">8</div>
<div class="t" style="left:325.55px;top:270.50px;font-size:8.50px;color:#111;font-family:'Liberation Sans',sans-serif;font-weight:bold;">10</div>
<div class="ab" style="left:295.2px;top:358.5px;width:82.3px;height:12.2px;border:1px solid #222;background:transparent"></div>
<div class="t" style="left:318.68px;top:361.22px;font-size:8.60px;color:#222;font-family:'Liberation Sans',sans-serif;transform:scaleX(0.8600);transform-origin:0 0;">SURADI C</div>
<div class="t" style="left:434.03px;top:261.00px;font-size:8.50px;color:#111;font-family:'Liberation Sans',sans-serif;font-weight:bold;">A</div>
<div class="t" style="left:482.50px;top:301.58px;font-size:8.50px;color:#111;font-family:'Liberation Sans',sans-serif;font-weight:bold;">B</div>
<div class="t" style="left:386.53px;top:301.58px;font-size:8.50px;color:#111;font-family:'Liberation Sans',sans-serif;font-weight:bold;">E</div>
<div class="t" style="left:464.50px;top:354.30px;font-size:8.50px;color:#111;font-family:'Liberation Sans',sans-serif;font-weight:bold;">C</div>
<div class="t" style="left:403.56px;top:354.30px;font-size:8.50px;color:#111;font-family:'Liberation Sans',sans-serif;font-weight:bold;">D</div>
<div class="t" style="left:430.57px;top:316.51px;font-size:8.50px;color:#111;font-family:'Liberation Sans',sans-serif;font-weight:bold;">0</div>
<div class="t" style="left:430.57px;top:307.17px;font-size:8.50px;color:#111;font-family:'Liberation Sans',sans-serif;font-weight:bold;">2</div>
<div class="t" style="left:430.57px;top:297.83px;font-size:8.50px;color:#111;font-family:'Liberation Sans',sans-serif;font-weight:bold;">4</div>
<div class="t" style="left:430.57px;top:288.49px;font-size:8.50px;color:#111;font-family:'Liberation Sans',sans-serif;font-weight:bold;">6</div>
<div class="t" style="left:430.57px;top:279.15px;font-size:8.50px;color:#111;font-family:'Liberation Sans',sans-serif;font-weight:bold;">8</div>
<div class="t" style="left:425.85px;top:269.80px;font-size:8.50px;color:#111;font-family:'Liberation Sans',sans-serif;font-weight:bold;">10</div>
<div class="ab" style="left:394.5px;top:359.8px;width:82.2px;height:12.5px;border:1px solid #222;background:transparent"></div>
<div class="t" style="left:413.27px;top:362.67px;font-size:8.60px;color:#222;font-family:'Liberation Sans',sans-serif;transform:scaleX(0.8600);transform-origin:0 0;">SUROTO MK</div>
<div class="t" style="left:538.33px;top:262.50px;font-size:8.50px;color:#111;font-family:'Liberation Sans',sans-serif;font-weight:bold;">A</div>
<div class="t" style="left:585.20px;top:301.48px;font-size:8.50px;color:#111;font-family:'Liberation Sans',sans-serif;font-weight:bold;">B</div>
<div class="t" style="left:492.43px;top:301.48px;font-size:8.50px;color:#111;font-family:'Liberation Sans',sans-serif;font-weight:bold;">E</div>
<div class="t" style="left:567.81px;top:351.60px;font-size:8.50px;color:#111;font-family:'Liberation Sans',sans-serif;font-weight:bold;">C</div>
<div class="t" style="left:508.85px;top:351.60px;font-size:8.50px;color:#111;font-family:'Liberation Sans',sans-serif;font-weight:bold;">D</div>
<div class="t" style="left:534.87px;top:315.69px;font-size:8.50px;color:#111;font-family:'Liberation Sans',sans-serif;font-weight:bold;">0</div>
<div class="t" style="left:534.87px;top:306.81px;font-size:8.50px;color:#111;font-family:'Liberation Sans',sans-serif;font-weight:bold;">2</div>
<div class="t" style="left:534.87px;top:297.94px;font-size:8.50px;color:#111;font-family:'Liberation Sans',sans-serif;font-weight:bold;">4</div>
<div class="t" style="left:534.87px;top:289.06px;font-size:8.50px;color:#111;font-family:'Liberation Sans',sans-serif;font-weight:bold;">6</div>
<div class="t" style="left:534.87px;top:280.18px;font-size:8.50px;color:#111;font-family:'Liberation Sans',sans-serif;font-weight:bold;">8</div>
<div class="t" style="left:530.15px;top:271.30px;font-size:8.50px;color:#111;font-family:'Liberation Sans',sans-serif;font-weight:bold;">10</div>
<div class="ab" style="left:500.2px;top:359.3px;width:82.3px;height:12.2px;border:1px solid #222;background:transparent"></div>
<div class="t" style="left:516.56px;top:362.02px;font-size:8.60px;color:#222;font-family:'Liberation Sans',sans-serif;transform:scaleX(0.8600);transform-origin:0 0;">RIYAN DONI P</div>
<div class="t" style="left:637.03px;top:262.50px;font-size:8.50px;color:#111;font-family:'Liberation Sans',sans-serif;font-weight:bold;">A</div>
<div class="t" style="left:682.20px;top:302.81px;font-size:8.50px;color:#111;font-family:'Liberation Sans',sans-serif;font-weight:bold;">B</div>
<div class="t" style="left:592.83px;top:302.81px;font-size:8.50px;color:#111;font-family:'Liberation Sans',sans-serif;font-weight:bold;">E</div>
<div class="t" style="left:665.46px;top:355.10px;font-size:8.50px;color:#111;font-family:'Liberation Sans',sans-serif;font-weight:bold;">C</div>
<div class="t" style="left:608.60px;top:355.10px;font-size:8.50px;color:#111;font-family:'Liberation Sans',sans-serif;font-weight:bold;">D</div>
<div class="t" style="left:633.57px;top:317.63px;font-size:8.50px;color:#111;font-family:'Liberation Sans',sans-serif;font-weight:bold;">0</div>
<div class="t" style="left:633.57px;top:308.36px;font-size:8.50px;color:#111;font-family:'Liberation Sans',sans-serif;font-weight:bold;">2</div>
<div class="t" style="left:633.57px;top:299.10px;font-size:8.50px;color:#111;font-family:'Liberation Sans',sans-serif;font-weight:bold;">4</div>
<div class="t" style="left:633.57px;top:289.83px;font-size:8.50px;color:#111;font-family:'Liberation Sans',sans-serif;font-weight:bold;">6</div>
<div class="t" style="left:633.57px;top:280.57px;font-size:8.50px;color:#111;font-family:'Liberation Sans',sans-serif;font-weight:bold;">8</div>
<div class="t" style="left:628.85px;top:271.30px;font-size:8.50px;color:#111;font-family:'Liberation Sans',sans-serif;font-weight:bold;">10</div>
<div class="ab" style="left:600.2px;top:360px;width:81.5px;height:13px;border:1px solid #222;background:transparent"></div>
<div class="t" style="left:627.25px;top:363.12px;font-size:8.60px;color:#222;font-family:'Liberation Sans',sans-serif;transform:scaleX(0.8600);transform-origin:0 0;">RASITO</div>
<div class="t" style="left:229.23px;top:374.40px;font-size:8.50px;color:#111;font-family:'Liberation Sans',sans-serif;font-weight:bold;">A</div>
<div class="t" style="left:278.10px;top:415.29px;font-size:8.50px;color:#111;font-family:'Liberation Sans',sans-serif;font-weight:bold;">B</div>
<div class="t" style="left:181.33px;top:415.29px;font-size:8.50px;color:#111;font-family:'Liberation Sans',sans-serif;font-weight:bold;">E</div>
<div class="t" style="left:259.94px;top:468.50px;font-size:8.50px;color:#111;font-family:'Liberation Sans',sans-serif;font-weight:bold;">C</div>
<div class="t" style="left:198.52px;top:468.50px;font-size:8.50px;color:#111;font-family:'Liberation Sans',sans-serif;font-weight:bold;">D</div>
<div class="t" style="left:225.77px;top:430.36px;font-size:8.50px;color:#111;font-family:'Liberation Sans',sans-serif;font-weight:bold;">0</div>
<div class="t" style="left:225.77px;top:420.93px;font-size:8.50px;color:#111;font-family:'Liberation Sans',sans-serif;font-weight:bold;">2</div>
<div class="t" style="left:225.77px;top:411.49px;font-size:8.50px;color:#111;font-family:'Liberation Sans',sans-serif;font-weight:bold;">4</div>
<div class="t" style="left:225.77px;top:402.06px;font-size:8.50px;color:#111;font-family:'Liberation Sans',sans-serif;font-weight:bold;">6</div>
<div class="t" style="left:225.77px;top:392.63px;font-size:8.50px;color:#111;font-family:'Liberation Sans',sans-serif;font-weight:bold;">8</div>
<div class="t" style="left:221.05px;top:383.20px;font-size:8.50px;color:#111;font-family:'Liberation Sans',sans-serif;font-weight:bold;">10</div>
<div class="ab" style="left:194.5px;top:477.7px;width:75.7px;height:13.5px;border:1px solid #222;background:#fff"></div>
<div class="t" style="left:210.16px;top:481.07px;font-size:8.60px;color:#222;font-family:'Liberation Sans',sans-serif;transform:scaleX(0.8600);transform-origin:0 0;">NANDANG H</div>
<div class="t" style="left:333.03px;top:374.80px;font-size:8.50px;color:#111;font-family:'Liberation Sans',sans-serif;font-weight:bold;">A</div>
<div class="t" style="left:382.40px;top:416.98px;font-size:8.50px;color:#111;font-family:'Liberation Sans',sans-serif;font-weight:bold;">B</div>
<div class="t" style="left:284.63px;top:416.98px;font-size:8.50px;color:#111;font-family:'Liberation Sans',sans-serif;font-weight:bold;">E</div>
<div class="t" style="left:364.05px;top:472.30px;font-size:8.50px;color:#111;font-family:'Liberation Sans',sans-serif;font-weight:bold;">C</div>
<div class="t" style="left:302.01px;top:472.30px;font-size:8.50px;color:#111;font-family:'Liberation Sans',sans-serif;font-weight:bold;">D</div>
<div class="t" style="left:329.57px;top:432.64px;font-size:8.50px;color:#111;font-family:'Liberation Sans',sans-serif;font-weight:bold;">0</div>
<div class="t" style="left:329.57px;top:422.83px;font-size:8.50px;color:#111;font-family:'Liberation Sans',sans-serif;font-weight:bold;">2</div>
<div class="t" style="left:329.57px;top:413.02px;font-size:8.50px;color:#111;font-family:'Liberation Sans',sans-serif;font-weight:bold;">4</div>
<div class="t" style="left:329.57px;top:403.22px;font-size:8.50px;color:#111;font-family:'Liberation Sans',sans-serif;font-weight:bold;">6</div>
<div class="t" style="left:329.57px;top:393.41px;font-size:8.50px;color:#111;font-family:'Liberation Sans',sans-serif;font-weight:bold;">8</div>
<div class="t" style="left:324.85px;top:383.60px;font-size:8.50px;color:#111;font-family:'Liberation Sans',sans-serif;font-weight:bold;">10</div>
<div class="ab" style="left:297.1px;top:479.4px;width:81.4px;height:13px;border:1px solid #222;background:transparent"></div>
<div class="t" style="left:317.87px;top:482.52px;font-size:8.60px;color:#222;font-family:'Liberation Sans',sans-serif;transform:scaleX(0.8600);transform-origin:0 0;">ROHMAD S</div>
<div class="t" style="left:439.23px;top:376.10px;font-size:8.50px;color:#111;font-family:'Liberation Sans',sans-serif;font-weight:bold;">A</div>
<div class="t" style="left:488.50px;top:416.95px;font-size:8.50px;color:#111;font-family:'Liberation Sans',sans-serif;font-weight:bold;">B</div>
<div class="t" style="left:390.93px;top:416.95px;font-size:8.50px;color:#111;font-family:'Liberation Sans',sans-serif;font-weight:bold;">E</div>
<div class="t" style="left:470.19px;top:470.10px;font-size:8.50px;color:#111;font-family:'Liberation Sans',sans-serif;font-weight:bold;">C</div>
<div class="t" style="left:408.27px;top:470.10px;font-size:8.50px;color:#111;font-family:'Liberation Sans',sans-serif;font-weight:bold;">D</div>
<div class="t" style="left:435.77px;top:432.00px;font-size:8.50px;color:#111;font-family:'Liberation Sans',sans-serif;font-weight:bold;">0</div>
<div class="t" style="left:435.77px;top:422.58px;font-size:8.50px;color:#111;font-family:'Liberation Sans',sans-serif;font-weight:bold;">2</div>
<div class="t" style="left:435.77px;top:413.16px;font-size:8.50px;color:#111;font-family:'Liberation Sans',sans-serif;font-weight:bold;">4</div>
<div class="t" style="left:435.77px;top:403.74px;font-size:8.50px;color:#111;font-family:'Liberation Sans',sans-serif;font-weight:bold;">6</div>
<div class="t" style="left:435.77px;top:394.32px;font-size:8.50px;color:#111;font-family:'Liberation Sans',sans-serif;font-weight:bold;">8</div>
<div class="t" style="left:431.05px;top:384.90px;font-size:8.50px;color:#111;font-family:'Liberation Sans',sans-serif;font-weight:bold;">10</div>
<div class="ab" style="left:402.9px;top:475.5px;width:81.7px;height:14.9px;border:1px solid #222;background:transparent"></div>
<div class="t" style="left:428.39px;top:479.57px;font-size:8.60px;color:#222;font-family:'Liberation Sans',sans-serif;transform:scaleX(0.8600);transform-origin:0 0;">WANNA'I</div>
<div class="t" style="left:545.23px;top:375.60px;font-size:8.50px;color:#111;font-family:'Liberation Sans',sans-serif;font-weight:bold;">A</div>
<div class="t" style="left:595.70px;top:415.30px;font-size:8.50px;color:#111;font-family:'Liberation Sans',sans-serif;font-weight:bold;">B</div>
<div class="t" style="left:495.73px;top:415.30px;font-size:8.50px;color:#111;font-family:'Liberation Sans',sans-serif;font-weight:bold;">E</div>
<div class="t" style="left:576.93px;top:466.60px;font-size:8.50px;color:#111;font-family:'Liberation Sans',sans-serif;font-weight:bold;">C</div>
<div class="t" style="left:513.53px;top:466.60px;font-size:8.50px;color:#111;font-family:'Liberation Sans',sans-serif;font-weight:bold;">D</div>
<div class="t" style="left:541.77px;top:429.84px;font-size:8.50px;color:#111;font-family:'Liberation Sans',sans-serif;font-weight:bold;">0</div>
<div class="t" style="left:541.77px;top:420.75px;font-size:8.50px;color:#111;font-family:'Liberation Sans',sans-serif;font-weight:bold;">2</div>
<div class="t" style="left:541.77px;top:411.67px;font-size:8.50px;color:#111;font-family:'Liberation Sans',sans-serif;font-weight:bold;">4</div>
<div class="t" style="left:541.77px;top:402.58px;font-size:8.50px;color:#111;font-family:'Liberation Sans',sans-serif;font-weight:bold;">6</div>
<div class="t" style="left:541.77px;top:393.49px;font-size:8.50px;color:#111;font-family:'Liberation Sans',sans-serif;font-weight:bold;">8</div>
<div class="t" style="left:537.05px;top:384.40px;font-size:8.50px;color:#111;font-family:'Liberation Sans',sans-serif;font-weight:bold;">10</div>
<div class="ab" style="left:509.5px;top:474.1px;width:80.6px;height:16.3px;border:1px solid #222;background:transparent"></div>
<div class="t" style="left:534.39px;top:478.87px;font-size:8.60px;color:#222;font-family:'Liberation Sans',sans-serif;transform:scaleX(0.8600);transform-origin:0 0;">LUKMAN</div>
<div class="t" style="left:643.03px;top:375.60px;font-size:8.50px;color:#111;font-family:'Liberation Sans',sans-serif;font-weight:bold;">A</div>
<div class="t" style="left:692.80px;top:415.30px;font-size:8.50px;color:#111;font-family:'Liberation Sans',sans-serif;font-weight:bold;">B</div>
<div class="t" style="left:594.23px;top:415.30px;font-size:8.50px;color:#111;font-family:'Liberation Sans',sans-serif;font-weight:bold;">E</div>
<div class="t" style="left:674.30px;top:466.60px;font-size:8.50px;color:#111;font-family:'Liberation Sans',sans-serif;font-weight:bold;">C</div>
<div class="t" style="left:611.76px;top:466.60px;font-size:8.50px;color:#111;font-family:'Liberation Sans',sans-serif;font-weight:bold;">D</div>
<div class="t" style="left:639.57px;top:429.84px;font-size:8.50px;color:#111;font-family:'Liberation Sans',sans-serif;font-weight:bold;">0</div>
<div class="t" style="left:639.57px;top:420.75px;font-size:8.50px;color:#111;font-family:'Liberation Sans',sans-serif;font-weight:bold;">2</div>
<div class="t" style="left:639.57px;top:411.67px;font-size:8.50px;color:#111;font-family:'Liberation Sans',sans-serif;font-weight:bold;">4</div>
<div class="t" style="left:639.57px;top:402.58px;font-size:8.50px;color:#111;font-family:'Liberation Sans',sans-serif;font-weight:bold;">6</div>
<div class="t" style="left:639.57px;top:393.49px;font-size:8.50px;color:#111;font-family:'Liberation Sans',sans-serif;font-weight:bold;">8</div>
<div class="t" style="left:634.85px;top:384.40px;font-size:8.50px;color:#111;font-family:'Liberation Sans',sans-serif;font-weight:bold;">10</div>
<div class="ab" style="left:608.7px;top:473.3px;width:81.4px;height:17.1px;border:1px solid #222;background:transparent"></div>
<div class="t" style="left:636.04px;top:478.47px;font-size:8.60px;color:#222;font-family:'Liberation Sans',sans-serif;transform:scaleX(0.8600);transform-origin:0 0;">FANANI</div>
<div class="ab" style="left:163px;top:188px;width:750px;height:19px;overflow:hidden">
<div class="t" style="left:16.40px;top:-10.93px;font-size:22.00px;color:#e8202a;font-family:'Liberation Sans',sans-serif;font-weight:bold;font-style:italic;transform:scaleX(1.7868);transform-origin:0 0;">KYB</div>
<div class="t" style="left:5.40px;top:11.80px;font-size:6.50px;color:#3a3a3a;font-family:'Liberation Sans',sans-serif;font-style:italic;transform:scaleX(1.1725);transform-origin:0 0;">Our Partner in Your Advantage</div>
<div class="t" style="left:141.00px;top:-3.29px;font-size:17.00px;color:#f0a040;font-family:'Liberation Sans',sans-serif;font-weight:bold;font-style:italic;transform:scaleX(1.1464);transform-origin:0 0;">P</div>
<div class="t" style="left:173.30px;top:-3.29px;font-size:17.00px;color:#e8c020;font-family:'Liberation Sans',sans-serif;font-weight:bold;font-style:italic;transform:scaleX(1.2136);transform-origin:0 0;">D</div>
<div class="t" style="left:204.40px;top:-2.28px;font-size:21.00px;color:#e81818;font-family:'Liberation Sans',sans-serif;font-weight:bold;font-style:italic;transform:scaleX(1.1869);transform-origin:0 0;">C</div>
<div class="t" style="left:238.00px;top:-3.29px;font-size:17.00px;color:#f0a050;font-family:'Liberation Sans',sans-serif;font-weight:bold;font-style:italic;transform:scaleX(1.1159);transform-origin:0 0;">A</div>
<div class="t" style="left:369.00px;top:-7.48px;font-size:21.00px;color:#111;font-family:'Liberation Sans',sans-serif;font-weight:bold;font-style:italic;transform:scaleX(0.8417);transform-origin:0 0;">EVALUASI HASIL</div>
<div class="t" style="left:656.00px;top:1.54px;font-size:12.00px;color:#e01a22;font-family:'Liberation Sans',sans-serif;font-weight:bold;font-style:italic;transform:scaleX(0.8952);transform-origin:0 0;">ASTRA</div>
<div class="t" style="left:696.00px;top:1.54px;font-size:12.00px;color:#111;font-family:'Liberation Sans',sans-serif;font-weight:bold;font-style:italic;transform:scaleX(0.8599);transform-origin:0 0;">Otoparts</div>
</div>
<div class="ab" style="left:790px;top:188px;width:30px;height:16px;overflow:hidden"><svg class="ab" style="left:0;top:0" width="30" height="16" viewBox="0 0 30 16"><circle cx="18" cy="3" r="7" fill="#2f5fc8"/><path d="M11 3h14 M18 -4v14 M13 -2Q18 3 13 8 M23 -2Q18 3 23 8" stroke="#cfe0ff" stroke-width="0.8" fill="none"/><path d="M6 -2L14 9" stroke="#e02020" stroke-width="2.2"/></svg></div>
<div class="t" style="left:225.50px;top:227.23px;font-size:18.00px;color:#3434d4;font-family:'Liberation Serif',serif;transform:scaleX(1.0522);transform-origin:0 0;">MORAL</div>
<div class="t" style="left:229.20px;top:511.44px;font-size:19.30px;color:#3434d4;font-family:'Liberation Serif',serif;">PRODUCTIVITY</div>
<div class="ab" style="left:161px;top:600px;width:752px;height:66px;overflow:hidden"><div class="t" style="left:64.20px;top:50.51px;font-size:17.90px;color:#3434d4;font-family:'Liberation Serif',serif;transform:scaleX(1.0581);transform-origin:0 0;">ENVIROMENT</div></div>
<div class="t" style="left:401.20px;top:224.16px;font-size:11.50px;color:#222;font-family:'Liberation Sans',sans-serif;transform:scaleX(0.9740);transform-origin:0 0;">~ Skill Map anggota naik 15 % dari </div>
<div class="t" style="left:577.10px;top:224.16px;font-size:11.50px;color:#e02020;font-family:'Liberation Sans',sans-serif;transform:scaleX(1.0144);transform-origin:0 0;">7.36 ( Mengerti dan perlu bimbingan)</div>
<div class="t" style="left:768.40px;top:224.16px;font-size:11.50px;color:#222;font-family:'Liberation Sans',sans-serif;transform:scaleX(1.0030);transform-origin:0 0;"> menjadi</div>
<div class="t" style="left:415.00px;top:238.26px;font-size:11.50px;color:#e02020;font-family:'Liberation Sans',sans-serif;transform:scaleX(1.0111);transform-origin:0 0;">8.48 ( Mengerti dan mandiri )</div>
<div class="t" style="left:455.30px;top:508.96px;font-size:11.50px;color:#222;font-family:'Liberation Sans',sans-serif;">~ Dengan berkurangnya defect painting karena tetesan maka productivity</div>
<div class="t" style="left:467.20px;top:523.56px;font-size:11.50px;color:#222;font-family:'Liberation Sans',sans-serif;transform:scaleX(0.9406);transform-origin:0 0;">meningkat sebesar</div>
<div class="t" style="left:562.40px;top:523.56px;font-size:11.50px;color:#e02020;font-family:'Liberation Sans',sans-serif;font-weight:bold;transform:scaleX(1.0642);transform-origin:0 0;">0.57 %</div>
<div class="t" style="left:602.50px;top:523.56px;font-size:11.50px;color:#222;font-family:'Liberation Sans',sans-serif;transform:scaleX(0.9911);transform-origin:0 0;">atau dari rata-rata 98.05%  menjadi 98.62%</div>
<div class="ab" style="left:161px;top:600px;width:752px;height:66px;overflow:hidden">
<div class="t" style="left:278.50px;top:39.16px;font-size:11.50px;color:#222;font-family:'Liberation Sans',sans-serif;transform:scaleX(1.0036);transform-origin:0 0;">~ Mengurangi limbah B3 yaitu chemical repair dari 113.04 L/bln menjadi 45.4</div>
<div class="t" style="left:278.50px;top:53.56px;font-size:11.50px;color:#222;font-family:'Liberation Sans',sans-serif;transform:scaleX(0.9723);transform-origin:0 0;">L/bln  atau sebesar sebesar</div>
<div class="t" style="left:420.00px;top:53.56px;font-size:11.50px;color:#e8482a;font-family:'Liberation Sans',sans-serif;transform:scaleX(1.0447);transform-origin:0 0;">67.64 liter/bulan</div>
<div class="t" style="left:509.10px;top:53.56px;font-size:11.50px;color:#222;font-family:'Liberation Sans',sans-serif;">dan limbah cat dari 35.33 kg</div>
</div>
<div class="ab" style="left:726px;top:263.5px;width:120px;height:105px;background:#111;"></div>
<div class="ab" style="left:727px;top:264.5px;width:118px;height:12.5px;background:#5ee84a;"></div>
<div class="ab" style="left:727px;top:278px;width:118px;height:12px;background:#fff;"></div>
<div class="ab" style="left:727px;top:290.5px;width:118px;height:44px;background:#fdf8cc;"></div>
<div class="ab" style="left:727px;top:335.5px;width:118px;height:32px;background:#3068ee;"></div>
<div class="t" style="left:749.70px;top:266.56px;font-size:10.20px;color:#1a2a10;font-family:'Liberation Sans',sans-serif;font-weight:bold;transform:scaleX(0.9738);transform-origin:0 0;">SESUDAH QCC</div>
<div class="t" style="left:737.70px;top:279.53px;font-size:10.00px;color:#111;font-family:'Liberation Sans',sans-serif;font-weight:bold;transform:scaleX(1.0367);transform-origin:0 0;">POINT RATA - RATA</div>
<div class="t" style="left:751.25px;top:340.57px;font-size:11.50px;color:#eef0a0;font-family:'Liberation Serif',serif;transform:scaleX(1.0968);transform-origin:0 0;">Mengerti Dan</div>
<div class="t" style="left:766.25px;top:354.67px;font-size:11.50px;color:#eef0a0;font-family:'Liberation Serif',serif;transform:scaleX(1.0824);transform-origin:0 0;">Mandiri</div>
<div class="t" style="left:742.30px;top:285.55px;font-size:54.51px;color:#f4906c;font-family:'Liberation Sans',sans-serif;font-weight:bold;transform:scaleX(0.8766);transform-origin:0 0;-webkit-text-stroke:1.4px #e04830;text-shadow:2.5px 2.5px 0 #b4b4ee;">8.48</div>
<div class="ab" style="left:728px;top:375.5px;width:123px;height:106px;background:#111;"></div>
<div class="ab" style="left:729px;top:376.5px;width:121px;height:14.5px;background:#ea7a1c;"></div>
<div class="ab" style="left:729px;top:392px;width:121px;height:11.5px;background:#fff;"></div>
<div class="ab" style="left:729px;top:404px;width:121px;height:47.5px;background:#fdf8cc;"></div>
<div class="ab" style="left:729px;top:452.5px;width:121px;height:28px;background:#3068ee;"></div>
<div class="t" style="left:752.90px;top:379.26px;font-size:10.20px;color:#2a1a08;font-family:'Liberation Sans',sans-serif;font-weight:bold;transform:scaleX(0.9778);transform-origin:0 0;">SEBELUM QCC</div>
<div class="t" style="left:740.50px;top:393.73px;font-size:10.00px;color:#111;font-family:'Liberation Sans',sans-serif;font-weight:bold;transform:scaleX(1.0389);transform-origin:0 0;">POINT RATA - RATA</div>
<div class="t" style="left:738.70px;top:400.15px;font-size:54.51px;color:#f4906c;font-family:'Liberation Sans',sans-serif;font-weight:bold;transform:scaleX(0.9191);transform-origin:0 0;-webkit-text-stroke:1.4px #e04830;text-shadow:2.5px 2.5px 0 #b4b4ee;">7.36</div>
<div class="t" style="left:750.50px;top:455.37px;font-size:11.50px;color:#f0f070;font-family:'Liberation Serif',serif;font-weight:bold;transform:scaleX(1.0894);transform-origin:0 0;">Mengerti Dan</div>
<div class="t" style="left:743.30px;top:469.07px;font-size:11.50px;color:#f0f070;font-family:'Liberation Serif',serif;font-weight:bold;transform:scaleX(1.0913);transform-origin:0 0;">Perlu Bimbingan</div>
<div class="ab" style="left:867.8px;top:308.1px;width:41px;height:38.3px;border:1px solid #c86060;background:#fff"></div>
<div class="t" style="left:881.40px;top:315.14px;font-size:11.00px;color:#a83434;font-family:'Liberation Sans',sans-serif;transform:scaleX(0.8900);transform-origin:0 0;">UP</div>
<div class="t" style="left:878.30px;top:329.99px;font-size:11.00px;color:#a83434;font-family:'Liberation Sans',sans-serif;transform:scaleX(0.9402);transform-origin:0 0;">15%</div>
<div class="ab" style="left:202.2px;top:549.1px;width:140.2px;height:33.8px;background:#fef98a;"></div>
<div class="ab" style="left:342.4px;top:549.1px;width:507.6px;height:17.2px;background:#fef98a;"></div>
<div class="ab" style="left:342.4px;top:566.3px;width:72.5px;height:66.9px;background:#c6d6ee;"></div>
<div class="ab" style="left:414.9px;top:566.3px;width:72.6px;height:66.9px;background:#c6d6ee;"></div>
<div class="ab" style="left:487.5px;top:566.3px;width:72.6px;height:66.9px;background:#c6d6ee;"></div>
<div class="ab" style="left:560.1px;top:566.3px;width:72.3px;height:66.9px;background:#ffff00;"></div>
<div class="ab" style="left:632.4px;top:566.3px;width:72.4px;height:66.9px;background:#ffff00;"></div>
<div class="ab" style="left:704.8px;top:566.3px;width:72.8px;height:66.9px;background:#ffff00;"></div>
<div class="ab" style="left:777.6px;top:566.3px;width:72.4px;height:66.9px;background:#00e400;"></div>
<div class="ab" style="left:202.2px;top:582.9px;width:104.4px;height:50.3px;background:#f8fefb;"></div>
<div class="ab" style="left:306.6px;top:582.9px;width:35.8px;height:50.3px;background:#e4f9ec;"></div>
<div class="ab" style="left:202.2px;top:548.45px;width:647.8px;height:1.3px;background:#111;"></div>
<div class="ab" style="left:202.2px;top:632.55px;width:647.8px;height:1.3px;background:#111;"></div>
<div class="ab" style="left:342.4px;top:565.65px;width:507.6px;height:1.3px;background:#111;"></div>
<div class="ab" style="left:202.2px;top:582.25px;width:647.8px;height:1.3px;background:#111;"></div>
<div class="ab" style="left:202.2px;top:599.15px;width:647.8px;height:1.3px;background:#111;"></div>
<div class="ab" style="left:202.2px;top:615.85px;width:647.8px;height:1.3px;background:#111;"></div>
<div class="ab" style="left:201.55px;top:549.1px;width:1.3px;height:84.1px;background:#111;"></div>
<div class="ab" style="left:849.35px;top:549.1px;width:1.3px;height:84.1px;background:#111;"></div>
<div class="ab" style="left:341.75px;top:549.1px;width:1.3px;height:84.1px;background:#111;"></div>
<div class="ab" style="left:305.95px;top:582.9px;width:1.3px;height:50.3px;background:#111;"></div>
<div class="ab" style="left:414.25px;top:566.3px;width:1.3px;height:66.9px;background:#111;"></div>
<div class="ab" style="left:486.85px;top:566.3px;width:1.3px;height:66.9px;background:#111;"></div>
<div class="ab" style="left:559.45px;top:566.3px;width:1.3px;height:66.9px;background:#111;"></div>
<div class="ab" style="left:631.75px;top:566.3px;width:1.3px;height:66.9px;background:#111;"></div>
<div class="ab" style="left:704.15px;top:566.3px;width:1.3px;height:66.9px;background:#111;"></div>
<div class="ab" style="left:776.95px;top:566.3px;width:1.3px;height:66.9px;background:#111;"></div>
<div class="t" style="left:258.30px;top:560.82px;font-size:11.20px;color:#111;font-family:'Liberation Sans',sans-serif;font-weight:bold;transform:scaleX(1.0653);transform-origin:0 0;">ITEM</div>
<div class="t" style="left:580.10px;top:552.12px;font-size:11.20px;color:#111;font-family:'Liberation Sans',sans-serif;font-weight:bold;transform:scaleX(1.0285);transform-origin:0 0;">Bulan</div>
<div class="t" style="left:355.70px;top:570.12px;font-size:11.20px;color:#111;font-family:'Liberation Sans',sans-serif;font-weight:bold;transform:scaleX(1.0963);transform-origin:0 0;">Sept' 12</div>
<div class="t" style="left:430.60px;top:570.12px;font-size:11.20px;color:#111;font-family:'Liberation Sans',sans-serif;font-weight:bold;transform:scaleX(1.1110);transform-origin:0 0;">Okt' 12</div>
<div class="t" style="left:502.80px;top:570.12px;font-size:11.20px;color:#111;font-family:'Liberation Sans',sans-serif;font-weight:bold;transform:scaleX(1.1017);transform-origin:0 0;">Nov' 12</div>
<div class="t" style="left:577.40px;top:570.12px;font-size:11.20px;color:#111;font-family:'Liberation Sans',sans-serif;font-weight:bold;transform:scaleX(1.0738);transform-origin:0 0;">Dec'12</div>
<div class="t" style="left:650.20px;top:570.12px;font-size:11.20px;color:#111;font-family:'Liberation Sans',sans-serif;font-weight:bold;transform:scaleX(1.0749);transform-origin:0 0;">Jan'13</div>
<div class="t" style="left:722.00px;top:570.12px;font-size:11.20px;color:#111;font-family:'Liberation Sans',sans-serif;font-weight:bold;transform:scaleX(1.0961);transform-origin:0 0;">Feb'13</div>
<div class="t" style="left:792.10px;top:570.12px;font-size:11.20px;color:#111;font-family:'Liberation Sans',sans-serif;font-weight:bold;transform:scaleX(1.1478);transform-origin:0 0;">Mart'13</div>
<div class="t" style="left:214.80px;top:586.92px;font-size:11.20px;color:#111;font-family:'Liberation Sans',sans-serif;transform:scaleX(1.1287);transform-origin:0 0;">Plan Produksi</div>
<div class="t" style="left:209.00px;top:603.82px;font-size:11.20px;color:#111;font-family:'Liberation Sans',sans-serif;transform:scaleX(1.1675);transform-origin:0 0;">Actual produksi</div>
<div class="t" style="left:222.80px;top:620.82px;font-size:11.20px;color:#111;font-family:'Liberation Sans',sans-serif;transform:scaleX(1.1296);transform-origin:0 0;">Prosentase</div>
<div class="t" style="left:315.80px;top:586.92px;font-size:11.20px;color:#111;font-family:'Liberation Sans',sans-serif;transform:scaleX(1.0385);transform-origin:0 0;">pcs</div>
<div class="t" style="left:315.80px;top:603.82px;font-size:11.20px;color:#111;font-family:'Liberation Sans',sans-serif;transform:scaleX(1.0385);transform-origin:0 0;">pcs</div>
<div class="t" style="left:319.40px;top:620.82px;font-size:11.20px;color:#111;font-family:'Liberation Sans',sans-serif;transform:scaleX(0.9741);transform-origin:0 0;">%</div>
<div class="t" style="left:364.10px;top:586.92px;font-size:11.20px;color:#111;font-family:'Liberation Sans',sans-serif;transform:scaleX(1.0744);transform-origin:0 0;">381,241</div>
<div class="t" style="left:436.60px;top:586.92px;font-size:11.20px;color:#111;font-family:'Liberation Sans',sans-serif;transform:scaleX(1.0744);transform-origin:0 0;">357,433</div>
<div class="t" style="left:509.20px;top:586.92px;font-size:11.20px;color:#111;font-family:'Liberation Sans',sans-serif;transform:scaleX(1.0794);transform-origin:0 0;">323,027</div>
<div class="t" style="left:575.10px;top:586.92px;font-size:11.20px;color:#111;font-family:'Liberation Sans',sans-serif;transform:scaleX(1.0522);transform-origin:0 0;">312,847</div>
<div class="t" style="left:647.50px;top:586.92px;font-size:11.20px;color:#111;font-family:'Liberation Sans',sans-serif;transform:scaleX(1.0720);transform-origin:0 0;">408,658</div>
<div class="t" style="left:719.80px;top:586.92px;font-size:11.20px;color:#111;font-family:'Liberation Sans',sans-serif;transform:scaleX(1.0720);transform-origin:0 0;">410,358</div>
<div class="t" style="left:792.10px;top:586.92px;font-size:11.20px;color:#111;font-family:'Liberation Sans',sans-serif;transform:scaleX(1.0720);transform-origin:0 0;">407,624</div>
<div class="t" style="left:364.10px;top:603.82px;font-size:11.20px;color:#111;font-family:'Liberation Sans',sans-serif;transform:scaleX(1.0744);transform-origin:0 0;">374,082</div>
<div class="t" style="left:436.60px;top:603.82px;font-size:11.20px;color:#111;font-family:'Liberation Sans',sans-serif;transform:scaleX(1.0744);transform-origin:0 0;">350,288</div>
<div class="t" style="left:509.20px;top:603.82px;font-size:11.20px;color:#111;font-family:'Liberation Sans',sans-serif;transform:scaleX(1.0794);transform-origin:0 0;">316,606</div>
<div class="t" style="left:582.40px;top:603.82px;font-size:11.20px;color:#111;font-family:'Liberation Sans',sans-serif;transform:scaleX(1.0423);transform-origin:0 0;">306,571</div>
<div class="t" style="left:653.80px;top:603.82px;font-size:11.20px;color:#111;font-family:'Liberation Sans',sans-serif;transform:scaleX(1.0670);transform-origin:0 0;">402,062</div>
<div class="t" style="left:726.20px;top:603.82px;font-size:11.20px;color:#111;font-family:'Liberation Sans',sans-serif;transform:scaleX(1.0769);transform-origin:0 0;">404,387</div>
<div class="t" style="left:799.30px;top:603.82px;font-size:11.20px;color:#111;font-family:'Liberation Sans',sans-serif;transform:scaleX(1.0596);transform-origin:0 0;">401,989</div>
<div class="t" style="left:358.80px;top:620.62px;font-size:11.20px;color:#111;font-family:'Liberation Sans',sans-serif;transform:scaleX(1.0319);transform-origin:0 0;">98.12%</div>
<div class="t" style="left:431.30px;top:620.62px;font-size:11.20px;color:#111;font-family:'Liberation Sans',sans-serif;transform:scaleX(1.0293);transform-origin:0 0;">98.00%</div>
<div class="t" style="left:503.60px;top:620.62px;font-size:11.20px;color:#111;font-family:'Liberation Sans',sans-serif;transform:scaleX(1.0477);transform-origin:0 0;">98.01%</div>
<div class="t" style="left:576.00px;top:620.62px;font-size:11.20px;color:#111;font-family:'Liberation Sans',sans-serif;transform:scaleX(1.0451);transform-origin:0 0;">97.99%</div>
<div class="t" style="left:648.30px;top:620.62px;font-size:11.20px;color:#111;font-family:'Liberation Sans',sans-serif;transform:scaleX(1.0477);transform-origin:0 0;">98.39%</div>
<div class="t" style="left:720.60px;top:620.62px;font-size:11.20px;color:#111;font-family:'Liberation Sans',sans-serif;transform:scaleX(1.0477);transform-origin:0 0;">98.55%</div>
<div class="t" style="left:793.80px;top:620.62px;font-size:11.20px;color:#111;font-family:'Liberation Sans',sans-serif;transform:scaleX(1.0398);transform-origin:0 0;">98.62%</div>
<div class="ab" style="left:1083px;top:367px;width:1px;height:26px;background:#bbb;"></div>
<div class="ab" style="left:1086px;top:367px;width:1px;height:26px;background:#bbb;"></div>
<div class="ab" style="left:1140px;top:121px;width:176px;height:99px;background:#242424;"></div>
<svg class="ab" style="left:1188px;top:130px;overflow:hidden" width="80" height="71" viewBox="0 0 80 71">
<rect width="80" height="71" fill="#6a7060"/>
<rect x="0" y="0" width="40" height="14" fill="#8a8478"/>
<rect x="66" y="0" width="14" height="22" fill="#1c2030"/>
<ellipse cx="38" cy="44" rx="50" ry="40" fill="#6a9830"/>
<ellipse cx="28" cy="26" rx="24" ry="16" fill="#98c448"/>
<ellipse cx="56" cy="24" rx="16" ry="12" fill="#8cba40"/>
<ellipse cx="16" cy="44" rx="14" ry="12" fill="#7eae3a"/>
<ellipse cx="66" cy="46" rx="12" ry="14" fill="#5a8a2c"/>
<ellipse cx="10" cy="60" rx="12" ry="8" fill="#4e7a28"/>
<ellipse cx="44" cy="14" rx="14" ry="7" fill="#a8cc58"/>
<rect x="0" y="64" width="80" height="7" fill="#7a8a50"/>
<path d="M18 71Q20 54 30 50L50 50Q60 52 63 62L62 71z" fill="#c41e22"/>
<path d="M48 40Q60 42 63 56L62 71L52 71z" fill="#c41e22"/>
<path d="M30 30L50 30Q60 40 60 52L48 60L32 58Q24 52 22 46Q24 36 30 30z" fill="#d8c2a4"/>
<path d="M30 22Q30 7 40 7Q50 7 50 22L50 33Q40 38 30 33z" fill="#d4bea2"/>
<ellipse cx="40" cy="21" rx="6.5" ry="9" fill="#e6c2aa"/>
<rect x="38" y="36" width="1.6" height="22" fill="#d02020"/>
</svg>
<div class="ab" style="left:1140px;top:201px;width:174px;height:19px;background:#2a2a2a;"></div>
<svg class="ab" style="left:1143px;top:204px" width="14" height="14" viewBox="0 0 14 14"><path d="M4 4Q4 0.5 6.5 0.5Q9 0.5 9 4V10.5H4z" fill="#ee4a58"/><rect x="3" y="11" width="7" height="2" fill="#ee4a58"/><path d="M0.8 13.2L12.8 1.2" stroke="#2a2a2a" stroke-width="2.4"/><path d="M0.8 13.2L12.8 1.2" stroke="#f27a86" stroke-width="1.1"/></svg>
<div class="t" style="left:1161.90px;top:205.02px;font-size:12.50px;color:#ececec;font-family:'Liberation Sans',sans-serif;transform:scaleX(1.0399);transform-origin:0 0;">Ike Agustin Hartanto Putri</div>
<svg class="ab" style="left:1140px;top:226px;overflow:hidden" width="176" height="99" viewBox="0 0 176 99">
<defs><linearGradient id="wall" x1="0" y1="0" x2="1" y2="1"><stop offset="0" stop-color="#e4e2e2"/><stop offset="1" stop-color="#d6d2d2"/></linearGradient></defs>
<rect width="176" height="99" fill="url(#wall)"/>
<g stroke="#3a3a3a" stroke-width="1.1" fill="none" opacity="0.65">
<path d="M30 12L52 30 M50 28a6 6 0 1 0 9 7"/>
<path d="M70 2Q78 14 88 18Q84 8 76 2"/>
<path d="M102 6Q114 22 108 44"/>
<path d="M104 38L158 18Q154 32 138 38L112 40z M104 36h10v6h-10z"/>
<circle cx="136" cy="8" r="8"/>
<path d="M116 62Q134 46 156 58Q146 68 132 62"/>
<path d="M0 22Q20 30 28 62"/>
<path d="M60 12Q64 24 70 28"/>
</g>
<g fill="#b84050"><circle cx="58" cy="5" r="1.5"/><circle cx="61" cy="12" r="1.5"/><circle cx="118" cy="20" r="1.3"/><circle cx="122" cy="30" r="1.3"/></g>
<path d="M130 12L142 2" stroke="#d04050" stroke-width="2"/>
<rect x="41.5" y="35" width="13.5" height="36" fill="#3c3432"/>
<rect x="44" y="38" width="8" height="30" fill="#5a504c"/>
<rect x="0" y="48" width="20" height="51" fill="#36406a"/>
<g fill="#a8b4d8" opacity="0.7"><circle cx="5" cy="58" r="3"/><circle cx="13" cy="70" r="3.5"/><circle cx="6" cy="84" r="3"/><circle cx="15" cy="92" r="2.5"/></g>
<path d="M142 99V36Q144 14 160 13Q176 14 176 30V99z" fill="#262222"/>
<ellipse cx="167" cy="46" rx="9" ry="17" fill="#6c5c58"/>
<path d="M32 99Q38 78 46 70Q48 44 62 32Q78 26 94 34Q104 46 104 66Q112 80 114 99z" fill="#8c8480"/>
<path d="M52 66Q54 40 74 36Q90 36 96 50" stroke="#6a625e" stroke-width="2.5" fill="none"/>
<ellipse cx="84" cy="54" rx="12.5" ry="17" fill="#c8aaa2"/>
<path d="M70 42Q84 32 98 42L98 46Q84 38 70 48z" fill="#3e3834"/>
</svg>
<div class="ab" style="left:1140px;top:305px;width:176px;height:20px;background:rgba(35,35,35,0.78);"></div>
<svg class="ab" style="left:1143px;top:309px" width="14" height="14" viewBox="0 0 14 14"><path d="M4 4Q4 0.5 6.5 0.5Q9 0.5 9 4V10.5H4z" fill="#ee4a58"/><rect x="3" y="11" width="7" height="2" fill="#ee4a58"/><path d="M0.8 13.2L12.8 1.2" stroke="#2a2a2a" stroke-width="2.4"/><path d="M0.8 13.2L12.8 1.2" stroke="#f27a86" stroke-width="1.1"/></svg>
<div class="t" style="left:1161.90px;top:310.42px;font-size:12.50px;color:#ececec;font-family:'Liberation Sans',sans-serif;transform:scaleX(0.9514);transform-origin:0 0;">LPB Pama Daya Taka_ Pa...</div>
<div class="ab" style="left:1140px;top:331px;width:176px;height:98px;background:#242424;"></div>
<div class="t" style="left:1165.00px;top:373.18px;font-size:14.20px;color:#fff;font-family:'Liberation Sans',sans-serif;font-weight:bold;transform:scaleX(0.9865);transform-origin:0 0;">Rusdi-  LPB  PDT...</div>
<div class="ab" style="left:1140px;top:411px;width:152.5px;height:18px;background:#2a2a2a;"></div>
<svg class="ab" style="left:1143px;top:413px" width="14" height="14" viewBox="0 0 14 14"><path d="M4 4Q4 0.5 6.5 0.5Q9 0.5 9 4V10.5H4z" fill="#ee4a58"/><rect x="3" y="11" width="7" height="2" fill="#ee4a58"/><path d="M0.8 13.2L12.8 1.2" stroke="#2a2a2a" stroke-width="2.4"/><path d="M0.8 13.2L12.8 1.2" stroke="#f27a86" stroke-width="1.1"/></svg>
<div class="t" style="left:1161.90px;top:414.42px;font-size:12.50px;color:#ececec;font-family:'Liberation Sans',sans-serif;transform:scaleX(0.9319);transform-origin:0 0;">Rusdi- LPB PDT PASER</div>
<div class="ab" style="left:1136px;top:432px;width:184px;height:107px;border:4px solid transparent;background:linear-gradient(#222,#222) padding-box,linear-gradient(180deg,#e6f48c 0%,#c4ec66 25%,#7ad620 45%,#6cd01a 62%,#c8ee6c 82%,#eaf48e 100%) border-box"></div>
<svg class="ab" style="left:1188px;top:445px;overflow:hidden" width="80" height="80" viewBox="0 0 80 80">
<rect width="80" height="80" fill="#fcfcfc"/>
<path d="M6 80Q4 46 20 38L32 30H48L62 36Q76 44 77 80z" fill="#505456"/>
<path d="M34 30L42 80L50 32z" fill="#e6e8ea"/>
<path d="M32 30L40 60L36 80H30z M48 32L44 60L50 80H56z" fill="#3e4244"/>
<ellipse cx="40" cy="17" rx="11" ry="13.5" fill="#94705a"/>
<path d="M29 14Q28 1 40 1Q52 1 51 14Q47 6 40 7Q33 7 29 14z" fill="#1c1816"/>
<path d="M22 56Q24 40 30 36L38 40Q36 52 30 60z" fill="#484c4e"/>
<ellipse cx="33" cy="40" rx="5" ry="6" fill="#8e6a56"/>
<rect x="31" y="24" width="5.5" height="12" rx="2.5" fill="#a8acb0"/>
</svg>
<div class="ab" style="left:1140px;top:516px;width:109px;height:19px;background:#2a2a2a;"></div>
<div class="t" style="left:1144.30px;top:520.12px;font-size:12.50px;color:#ececec;font-family:'Liberation Sans',sans-serif;transform:scaleX(1.0286);transform-origin:0 0;">Agung Sungkowo</div>
<div class="ab" style="left:1140px;top:542px;width:176px;height:98px;background:#242424;"></div>
<div class="t" style="left:1162.90px;top:582.98px;font-size:14.20px;color:#fff;font-family:'Liberation Sans',sans-serif;font-weight:bold;transform:scaleX(1.0361);transform-origin:0 0;">Rendu  Apriozan...</div>
<div class="ab" style="left:1141px;top:620.5px;width:139.7px;height:19.5px;background:#2a2a2a;"></div>
<div class="t" style="left:1144.30px;top:625.02px;font-size:12.50px;color:#ececec;font-family:'Liberation Sans',sans-serif;transform:scaleX(1.0050);transform-origin:0 0;">Rendu Apriozani_Paser</div>
<svg class="ab" style="left:1008px;top:306px" width="12" height="18" viewBox="0 0 12 18"><path d="M0.5 0.5L0.5 15L4 11.5L6.5 17L8.5 16L6 10.5L11 10.5z" fill="#fff" stroke="#000" stroke-width="1"/></svg>
<div class="ab" style="left:19px;top:632.5px;width:39px;height:39px;border-radius:50%;background:#1e1f1f;box-shadow:0 0 2px rgba(0,0,0,0.6)"></div>
<svg class="ab" style="left:30px;top:644px" width="17" height="17" viewBox="0 0 17 17"><path d="M3 14L1.8 15.2 M2.5 10.5L11.5 1.5Q13 0.8 14.5 2.5Q16 4 15.3 5.3L6.3 14.3L2 15z" stroke="#27c55a" stroke-width="1.5" fill="none" stroke-linejoin="round"/></svg>
<svg class="ab" style="left:34px;top:690px" width="24" height="24" viewBox="0 0 24 24"><rect x="8" y="1" width="8" height="14" rx="4" fill="#c4c4c4"/><path d="M5 11a7 7 0 0 0 14 0" stroke="#c4c4c4" stroke-width="1.6" fill="none"/><path d="M12 18v3.5 M8 22.5h8" stroke="#c4c4c4" stroke-width="1.6"/><path d="M1 23L23 1" stroke="#e05050" stroke-width="1.6"/></svg>
<svg class="ab" style="left:73.5px;top:700px" width="10" height="6" viewBox="0 0 10 6"><path d="M1.5 5L5 1.5L8.5 5" stroke="#c8c8c8" stroke-width="1.4" fill="none"/></svg>
<div class="t" style="left:24.10px;top:718.93px;font-size:12.60px;color:#c4c4c4;font-family:'Liberation Sans',sans-serif;transform:scaleX(0.9724);transform-origin:0 0;-webkit-text-stroke:0.3px currentColor;">Unmute</div>
<svg class="ab" style="left:126px;top:694px" width="26" height="16" viewBox="0 0 26 16"><rect x="0.5" y="0.5" width="17" height="15" rx="3" fill="#c4c4c4"/><path d="M19 5.5L25.5 1.5V14.5L19 10.5z" fill="#c4c4c4"/></svg>
<svg class="ab" style="left:171.5px;top:700px" width="10" height="6" viewBox="0 0 10 6"><path d="M1.5 5L5 1.5L8.5 5" stroke="#c8c8c8" stroke-width="1.4" fill="none"/></svg>
<div class="t" style="left:109.40px;top:718.93px;font-size:12.60px;color:#c4c4c4;font-family:'Liberation Sans',sans-serif;transform:scaleX(0.9541);transform-origin:0 0;-webkit-text-stroke:0.3px currentColor;">Stop Video</div>
<svg class="ab" style="left:403px;top:693px" width="26" height="18" viewBox="0 0 26 18"><circle cx="8" cy="4.5" r="4" fill="#c4c4c4"/><circle cx="18" cy="6" r="3.5" fill="#c4c4c4"/><path d="M0.5 17.5Q0.5 10 8 10Q15.5 10 15.5 17.5z" fill="#c4c4c4"/><path d="M14 17.5Q14 11 19 11Q25 11 25 17.5z" fill="#c4c4c4"/></svg>
<div class="t" style="left:432.40px;top:694.76px;font-size:11.50px;color:#c4c4c4;font-family:'Liberation Sans',sans-serif;transform:scaleX(0.9537);transform-origin:0 0;">5</div>
<svg class="ab" style="left:464px;top:699.5px" width="10" height="6" viewBox="0 0 10 6"><path d="M1.5 5L5 1.5L8.5 5" stroke="#c8c8c8" stroke-width="1.4" fill="none"/></svg>
<div class="t" style="left:385.40px;top:718.83px;font-size:12.60px;color:#c4c4c4;font-family:'Liberation Sans',sans-serif;transform:scaleX(0.9388);transform-origin:0 0;-webkit-text-stroke:0.3px currentColor;">Participants</div>
<svg class="ab" style="left:515px;top:693px" width="22" height="18" viewBox="0 0 22 18"><path d="M4 0.5H18Q21.5 0.5 21.5 4V10Q21.5 13.5 18 13.5H9L4 17.5V13.5Q0.5 13.5 0.5 10V4Q0.5 0.5 4 0.5z" fill="#c4c4c4"/></svg>
<svg class="ab" style="left:554px;top:699.5px" width="10" height="6" viewBox="0 0 10 6"><path d="M1.5 5L5 1.5L8.5 5" stroke="#c8c8c8" stroke-width="1.4" fill="none"/></svg>
<div class="t" style="left:514.10px;top:718.83px;font-size:12.60px;color:#c4c4c4;font-family:'Liberation Sans',sans-serif;transform:scaleX(0.8980);transform-origin:0 0;-webkit-text-stroke:0.3px currentColor;">Chat</div>
<div class="ab" style="left:608px;top:693.2px;width:24.1px;height:17.4px;background:#27c95a;border-radius:3px"></div>
<svg class="ab" style="left:614px;top:695px" width="12" height="13" viewBox="0 0 12 13"><path d="M6 11.5V2 M2 6L6 2L10 6" stroke="#0a1a0a" stroke-width="1.8" fill="none"/></svg>
<div class="t" style="left:585.20px;top:718.83px;font-size:12.60px;color:#35cf5c;font-family:'Liberation Sans',sans-serif;transform:scaleX(0.8890);transform-origin:0 0;-webkit-text-stroke:0.3px currentColor;">Share Screen</div>
<svg class="ab" style="left:698px;top:690.5px" width="22" height="22" viewBox="0 0 22 22"><circle cx="11" cy="11" r="9.5" stroke="#c4c4c4" stroke-width="1.6" fill="none"/><circle cx="11" cy="11" r="7" fill="#c4c4c4"/></svg>
<div class="t" style="left:690.50px;top:718.83px;font-size:12.60px;color:#c4c4c4;font-family:'Liberation Sans',sans-serif;transform:scaleX(0.8986);transform-origin:0 0;-webkit-text-stroke:0.3px currentColor;">Record</div>
<div class="ab" style="left:784px;top:693px;width:24px;height:18px;background:#c4c4c4;border-radius:2px"></div>
<div class="t" style="left:789.00px;top:697.81px;font-size:10.50px;color:#1e1e1e;font-family:'Liberation Sans',sans-serif;font-weight:bold;transform:scaleX(0.9231);transform-origin:0 0;">CC</div>
<svg class="ab" style="left:827px;top:699.5px" width="10" height="6" viewBox="0 0 10 6"><path d="M1.5 5L5 1.5L8.5 5" stroke="#c8c8c8" stroke-width="1.4" fill="none"/></svg>
<div class="t" style="left:757.00px;top:718.83px;font-size:12.60px;color:#c4c4c4;font-family:'Liberation Sans',sans-serif;transform:scaleX(0.9321);transform-origin:0 0;-webkit-text-stroke:0.3px currentColor;">Show Captions</div>
<svg class="ab" style="left:875px;top:689px" width="22" height="23" viewBox="0 0 22 23"><circle cx="9.5" cy="13" r="9" fill="#c4c4c4"/><circle cx="6.5" cy="11" r="1.2" fill="#1a1a1a"/><circle cx="12.5" cy="11" r="1.2" fill="#1a1a1a"/><path d="M5.5 15Q9.5 19 13.5 15" stroke="#1a1a1a" stroke-width="1.3" fill="none"/><path d="M17.5 0.5v6 M14.5 3.5h6" stroke="#c4c4c4" stroke-width="1.4"/></svg>
<div class="t" style="left:858.00px;top:718.83px;font-size:12.60px;color:#c4c4c4;font-family:'Liberation Sans',sans-serif;transform:scaleX(0.9102);transform-origin:0 0;-webkit-text-stroke:0.3px currentColor;">Reactions</div>
<svg class="ab" style="left:955px;top:693px" width="18" height="18" viewBox="0 0 18 18"><path d="M1 6V3Q1 1 3 1H8 M1 11V15Q1 17 3 17H6 M11 17H15Q17 17 17 15V11" stroke="#c4c4c4" stroke-width="1.6" fill="none"/><circle cx="14" cy="4" r="2.6" stroke="#c4c4c4" stroke-width="1.6" fill="none"/><circle cx="4" cy="14" r="1.3" fill="#c4c4c4"/></svg>
<div class="t" style="left:949.50px;top:718.83px;font-size:12.60px;color:#c4c4c4;font-family:'Liberation Sans',sans-serif;transform:scaleX(0.9575);transform-origin:0 0;-webkit-text-stroke:0.3px currentColor;">Apps</div>
<svg class="ab" style="left:1043px;top:693px" width="21" height="18" viewBox="0 0 21 18"><path d="M7 15H3Q1 15 1 13V3Q1 1 3 1H18Q20 1 20 3V11" stroke="#c4c4c4" stroke-width="1.6" fill="none"/><rect x="9" y="12" width="11" height="4" rx="2" fill="#c4c4c4"/></svg>
<div class="t" style="left:1019.00px;top:718.83px;font-size:12.60px;color:#c4c4c4;font-family:'Liberation Sans',sans-serif;transform:scaleX(0.9613);transform-origin:0 0;-webkit-text-stroke:0.3px currentColor;">Whiteboards</div>
<div class="ab" style="left:1293px;top:698px;width:61px;height:27px;background:#c5242c;border-radius:6px"></div>
<div class="t" style="left:1307.00px;top:705.03px;font-size:12.60px;color:#fff;font-family:'Liberation Sans',sans-serif;font-weight:bold;transform:scaleX(0.8957);transform-origin:0 0;">Leave</div>
<div class="ab" style="left:0px;top:738px;width:1366px;height:30px;background:linear-gradient(90deg,#1d3744 0%,#213440 45%,#1f3044 70%,#1a2948 100%);"></div>
<div class="ab" style="left:0px;top:738px;width:36px;height:30px;background:#1d3a48;"></div>
<svg class="ab" style="left:10px;top:745px" width="17" height="16" viewBox="0 0 17 16"><path d="M0 2.3L7 1.3V7.5H0z M8 1.1L17 0V7.5H8z M0 8.5H7V14.7L0 13.7z M8 8.5H17V16L8 14.9z" fill="#fff"/></svg>
<div class="ab" style="left:36px;top:738px;width:257.5px;height:30px;background:#f2f2f2;"></div>
<svg class="ab" style="left:48px;top:746px" width="17" height="15" viewBox="0 0 17 15"><circle cx="10.5" cy="6" r="5" stroke="#222" stroke-width="1.3" fill="none"/><path d="M7 9.5L1 14.5" stroke="#222" stroke-width="1.5"/></svg>
<div class="t" style="left:76.70px;top:747.65px;font-size:13.40px;color:#2a2a2a;font-family:'Liberation Sans',sans-serif;transform:scaleX(1.0080);transform-origin:0 0;">Search</div>
<svg class="ab" style="left:235px;top:738px" width="58" height="30" viewBox="0 0 58 30"><rect x="0" y="26" width="58" height="4" fill="#e0c8a8"/><rect x="5" y="11" width="28" height="15" rx="2" fill="#b85a2e"/><rect x="7" y="8" width="22" height="6" fill="#4a9ad8"/><rect x="5" y="14" width="28" height="3" fill="#8a3a1a"/><rect x="32" y="6" width="22" height="22" rx="1" fill="#555"/><rect x="34" y="8" width="18" height="5" fill="#ccc"/><g fill="#ddd"><rect x="34" y="15" width="4" height="3"/><rect x="40" y="15" width="4" height="3"/><rect x="46" y="15" width="4" height="3"/><rect x="34" y="20" width="4" height="3"/><rect x="40" y="20" width="4" height="3"/><rect x="46" y="20" width="4" height="3"/></g></svg>
<svg class="ab" style="left:304px;top:745px" width="17" height="16" viewBox="0 0 17 16"><path d="M3 0.5h10 M3 15.5h10 M2.5 3.5h10v9h-10z M15.5 3v10" stroke="#fff" stroke-width="1.1" fill="none"/></svg>
<svg class="ab" style="left:342px;top:746px" width="19" height="14" viewBox="0 0 19 14"><rect x="0" y="3" width="19" height="11" fill="#1a8ee0"/><path d="M0 3L9.5 10L19 3L9.5 0z" fill="#5ec0ff"/></svg>
<svg class="ab" style="left:380px;top:745px" width="16" height="16" viewBox="0 0 16 16"><rect x="0" y="3" width="16" height="13" rx="2" fill="#e8e8ea"/><path d="M5 3V1.5h6V3" stroke="#ddd" fill="none"/><rect x="4" y="6" width="3.5" height="3.5" fill="#f25022"/><rect x="8.5" y="6" width="3.5" height="3.5" fill="#7fba00"/><rect x="4" y="10.5" width="3.5" height="3.5" fill="#00a4ef"/><rect x="8.5" y="10.5" width="3.5" height="3.5" fill="#ffb900"/></svg>
<svg class="ab" style="left:416px;top:744px" width="18" height="18" viewBox="0 0 18 18"><circle cx="9" cy="9" r="8.5" fill="#1a8bd8"/><path d="M2 11Q3 3 10 3Q16 3.5 16.5 9Q16 12 12 12H6Q6.5 15.5 12 15.5Q14 15.5 15.5 14.5Q13 17.5 9 17.5Q3 17 2 11z" fill="#3ad07a"/><path d="M6 10Q6 6 10 6Q13 6 13.5 8.5H6z" fill="#1d2a37"/></svg>
<svg class="ab" style="left:453px;top:744px" width="18" height="18" viewBox="0 0 18 18"><circle cx="9" cy="9" r="8.5" fill="#db4437"/><path d="M9 9L1.6 4.8A8.5 8.5 0 0 0 6 17z" fill="#0f9d58"/><path d="M9 9L6 17A8.5 8.5 0 0 0 17.5 8z" fill="#ffcd40"/><circle cx="9" cy="9" r="4" fill="#fff"/><circle cx="9" cy="9" r="3.1" fill="#4285f4"/></svg>
<svg class="ab" style="left:490px;top:744px" width="18" height="18" viewBox="0 0 18 18"><circle cx="9" cy="9" r="8.5" fill="#db4437"/><path d="M9 9L1.6 4.8A8.5 8.5 0 0 0 6 17z" fill="#0f9d58"/><path d="M9 9L6 17A8.5 8.5 0 0 0 17.5 8z" fill="#ffcd40"/><circle cx="9" cy="9" r="4" fill="#fff"/><circle cx="9" cy="9" r="3.1" fill="#4285f4"/></svg>
<svg class="ab" style="left:500px;top:754px" width="9" height="9"><circle cx="4.5" cy="4.5" r="4" fill="#ccc"/></svg>
<svg class="ab" style="left:527px;top:745px" width="18" height="15" viewBox="0 0 18 15"><path d="M0 1H7L9 3H18V15H0z" fill="#f0c040"/><rect x="0" y="5" width="18" height="10" fill="#ffd860"/><rect x="5" y="9" width="8" height="6" fill="#2a88d8"/></svg>
<svg class="ab" style="left:564px;top:744px" width="17" height="17" viewBox="0 0 17 17"><rect width="17" height="17" rx="2" fill="#b30b00"/><path d="M3 13Q6 7 8.5 3Q10 6 14 11Q9 10 3 13z" stroke="#fff" stroke-width="1.3" fill="none"/></svg>
<svg class="ab" style="left:601px;top:744px" width="18" height="18" viewBox="0 0 18 18"><circle cx="9" cy="9" r="8.5" fill="#2d6cf0"/></svg>
<div class="t" style="left:605.00px;top:750.93px;font-size:8.00px;color:#fff;font-family:'Liberation Sans',sans-serif;font-weight:bold;transform:scaleX(0.8998);transform-origin:0 0;">zm</div>
<div class="ab" style="left:485px;top:765.5px;width:29px;height:2.5px;background:#7ab8f0;"></div>
<div class="ab" style="left:522.5px;top:765.5px;width:27.5px;height:2.5px;background:#7ab8f0;"></div>
<div class="ab" style="left:560px;top:765.5px;width:27.5px;height:2.5px;background:#7ab8f0;"></div>
<div class="ab" style="left:597.5px;top:765.5px;width:27.5px;height:2.5px;background:#7ab8f0;"></div>
<svg class="ab" style="left:906px;top:741px" width="26" height="23" viewBox="0 0 26 23"><circle cx="13" cy="11" r="9" fill="#f6a623"/><ellipse cx="7" cy="6" rx="6" ry="4" fill="#d8e4f0"/><ellipse cx="17" cy="18" rx="8" ry="4.5" fill="#d8e4f0"/></svg>
<div class="t" style="left:938.70px;top:747.65px;font-size:13.40px;color:#fff;font-family:'Liberation Sans',sans-serif;transform:scaleX(0.9752);transform-origin:0 0;">33°C</div>
<div class="t" style="left:976.80px;top:747.65px;font-size:13.40px;color:#fff;font-family:'Liberation Sans',sans-serif;transform:scaleX(1.0045);transform-origin:0 0;">Sebagian cerah</div>
<svg class="ab" style="left:1089px;top:747px" width="14" height="9" viewBox="0 0 14 9"><path d="M1 8L7 2L13 8" stroke="#fff" stroke-width="1.2" fill="none"/></svg>
<svg class="ab" style="left:1114px;top:745px" width="13" height="16" viewBox="0 0 13 16"><rect x="1.5" y="4" width="7" height="8" rx="1.5" stroke="#fff" stroke-width="1.1" fill="none"/><path d="M8.5 6.5L12 4.5V11.5L8.5 9.5 M3 1.5h4 M3 14.5h4" stroke="#fff" stroke-width="1.1" fill="none"/></svg>
<svg class="ab" style="left:1135px;top:749px" width="18" height="10" viewBox="0 0 18 10"><path d="M3 10Q0 10 0 7Q0 4.5 3 4.5Q4 0 8.5 0Q12 0 13 3Q18 3 18 6.5Q18 10 15 10z" fill="#2a8ae8"/></svg>
<svg class="ab" style="left:1163px;top:745px" width="11" height="16" viewBox="0 0 11 16"><rect x="3" y="0.5" width="5" height="10" rx="2.5" fill="#fff"/><path d="M1 7.5Q1 12 5.5 12Q10 12 10 7.5 M5.5 12V15.5" stroke="#fff" stroke-width="1.1" fill="none"/></svg>
<svg class="ab" style="left:1184px;top:746px" width="17" height="14" viewBox="0 0 17 14"><rect x="1" y="4" width="15" height="9" stroke="#fff" stroke-width="1.1" fill="none"/><rect x="3" y="6" width="11" height="5" fill="#fff"/><path d="M4 0.5v4 M6.5 0.5v4" stroke="#fff" stroke-width="1.1"/></svg>
<svg class="ab" style="left:1211px;top:746px" width="13" height="14" viewBox="0 0 13 14"><path d="M1 13A12 12 0 0 1 12.5 1.5 M4 13A9 9 0 0 1 12.5 4.5 M7 13A6 6 0 0 1 12.5 7.5 M10 13A3 3 0 0 1 12.5 10.5" stroke="#fff" stroke-width="1.1" fill="none"/></svg>
<svg class="ab" style="left:1231px;top:746px" width="16" height="14" viewBox="0 0 16 14"><path d="M1 4.5H4L8 1V13L4 9.5H1z" stroke="#fff" stroke-width="1.1" fill="none"/><path d="M10.5 5L15 9.5 M15 5L10.5 9.5" stroke="#fff" stroke-width="1.1"/></svg>
<div class="t" style="left:1260.80px;top:747.23px;font-size:12.60px;color:#fff;font-family:'Liberation Sans',sans-serif;transform:scaleX(0.8950);transform-origin:0 0;">3:14 PM</div>
<svg class="ab" style="left:1325px;top:745px" width="17" height="16" viewBox="0 0 17 16"><path d="M0.5 0.5H16.5V12H8L4.5 15.5V12H0.5z" stroke="#fff" stroke-width="1.1" fill="none"/></svg>
<div class="ab" style="left:1360px;top:738px;width:1px;height:30px;background:#55606a;"></div>
</body></html>
